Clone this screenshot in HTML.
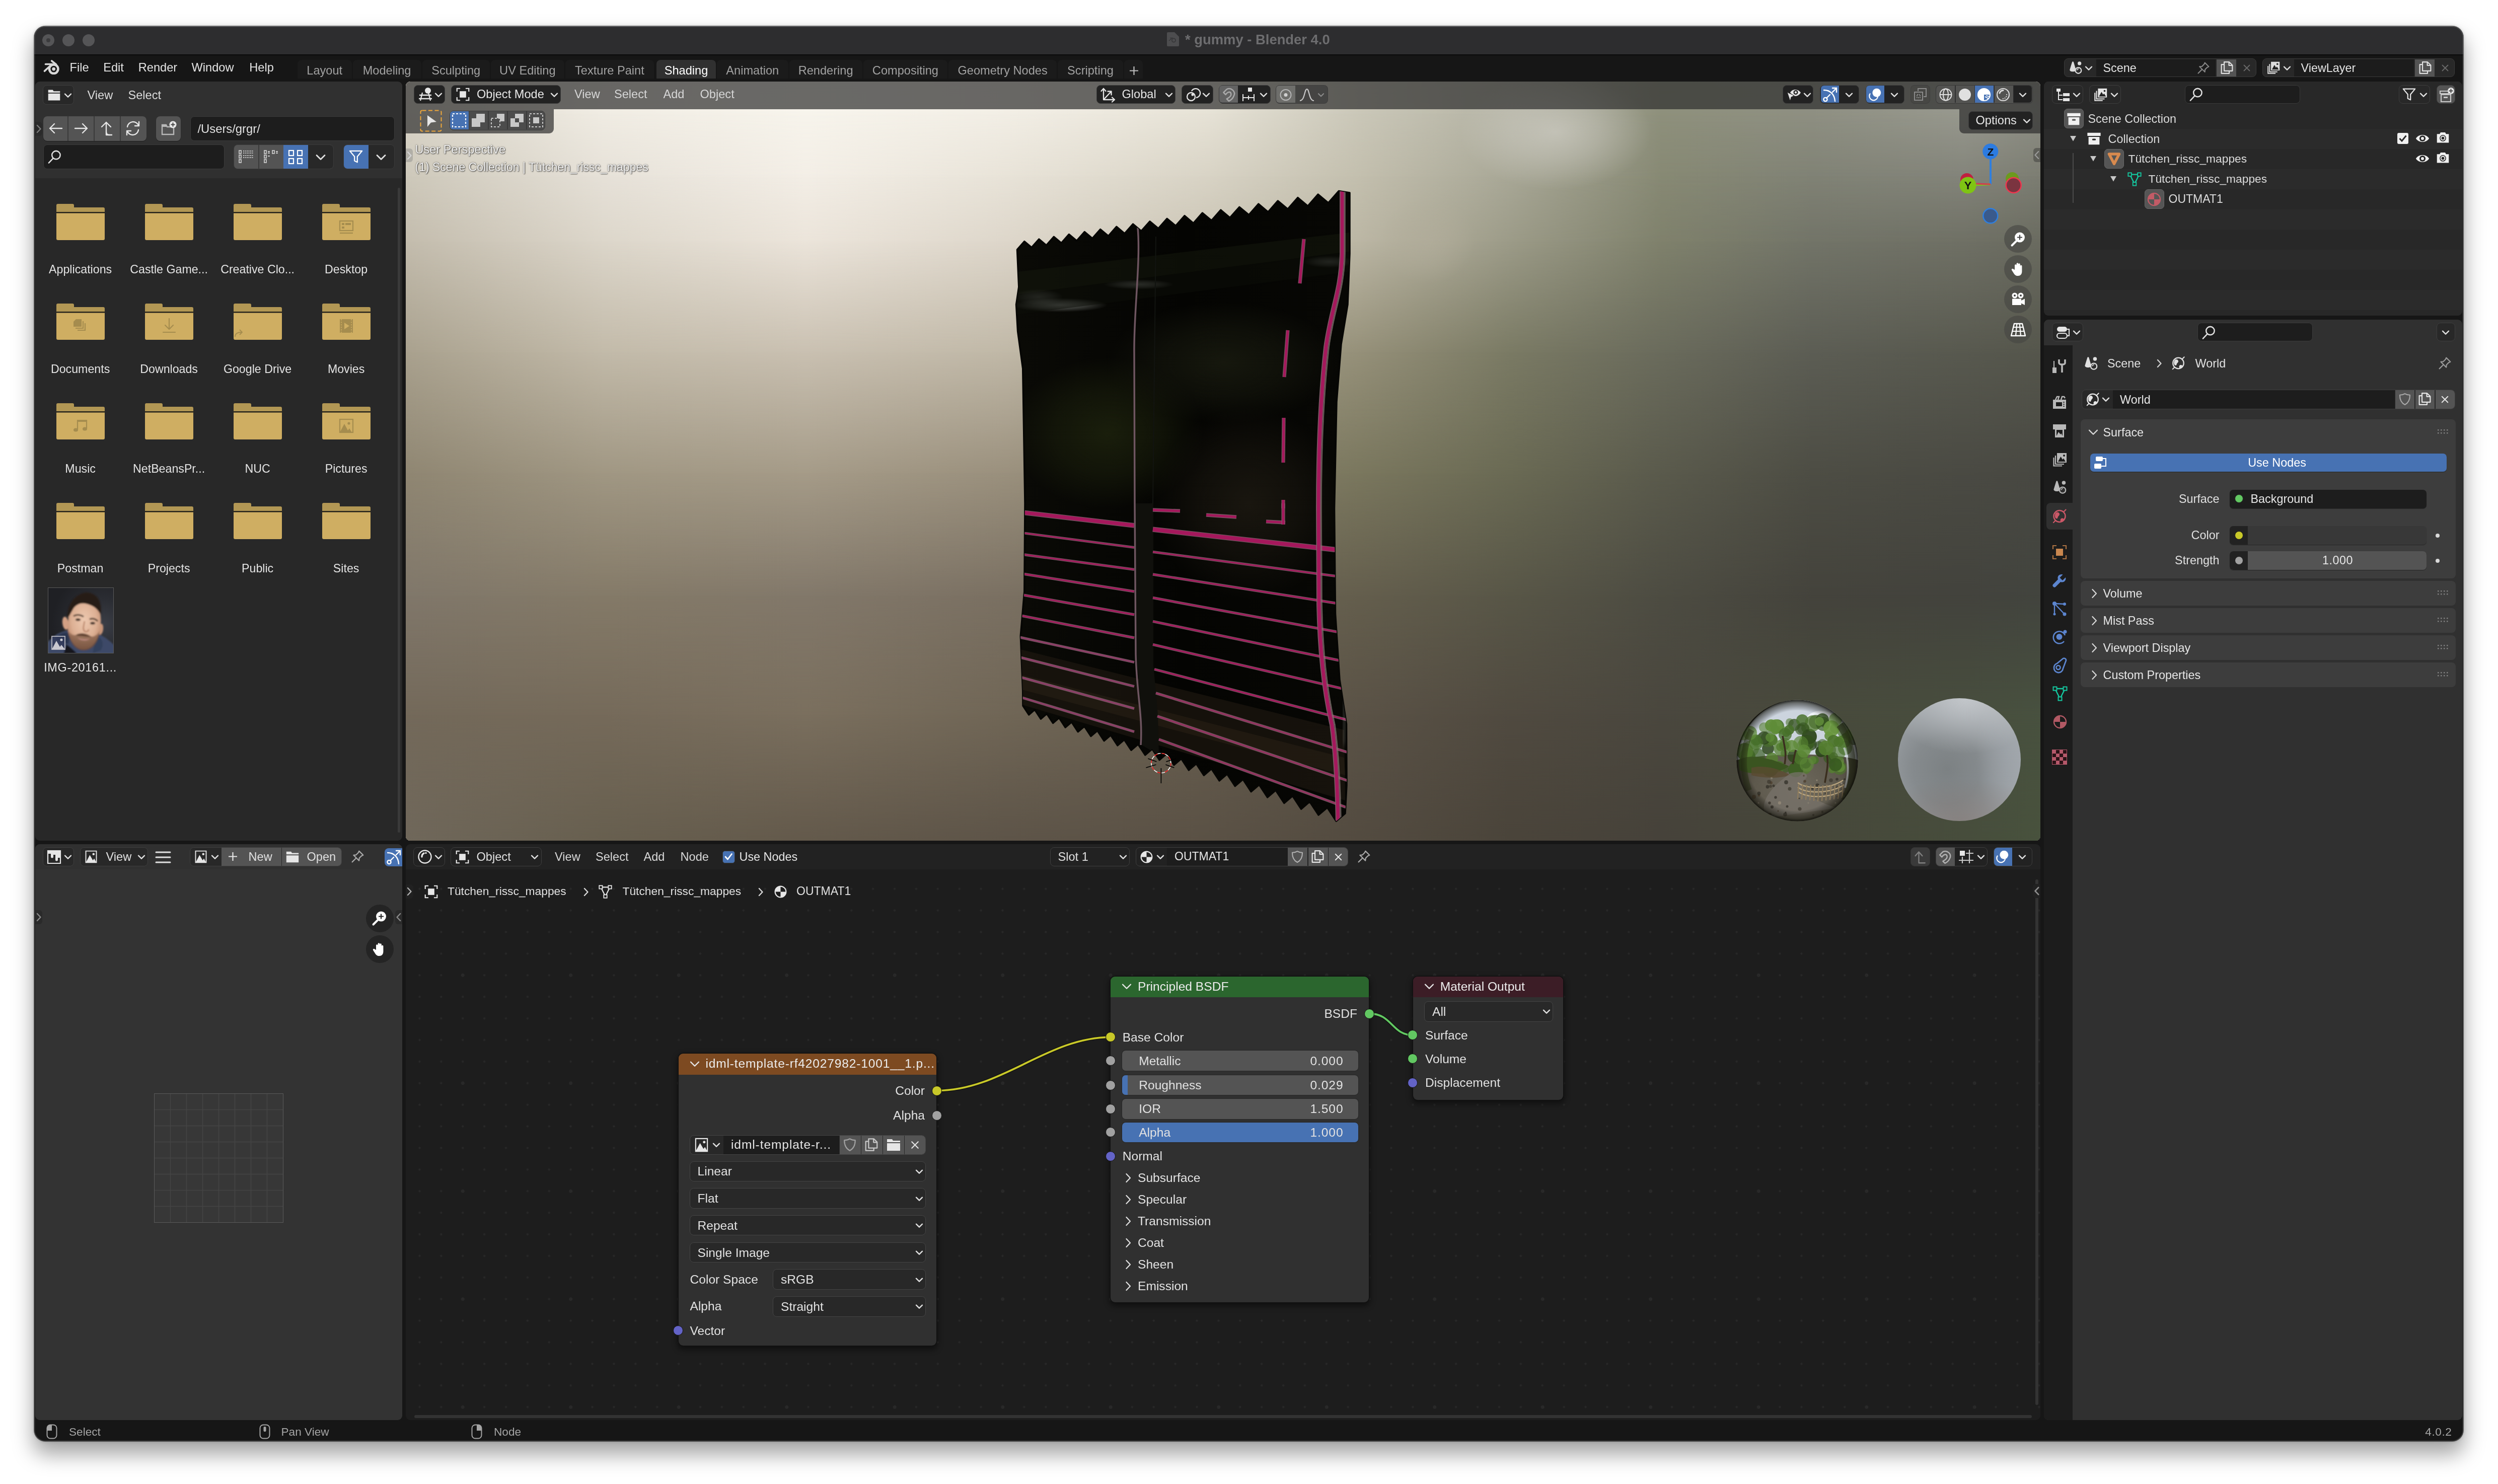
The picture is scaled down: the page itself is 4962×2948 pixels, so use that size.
<!DOCTYPE html>
<html><head><meta charset="utf-8"><title>gummy - Blender 4.0</title>
<style>
html,body{margin:0;padding:0;background:#fff;}
body{width:4962px;height:2948px;position:relative;overflow:hidden;font-family:"Liberation Sans","DejaVu Sans",sans-serif;}
div,svg{position:absolute;box-sizing:border-box;}
svg{overflow:visible;}
svg text{font-family:"Liberation Sans","DejaVu Sans",sans-serif;}
.btn{box-shadow:0 1px 1px rgba(0,0,0,.35);}
</style></head><body>
<div style="left:68px;top:52px;width:4824.5px;height:2811px;background:#161616;border-radius:22px;box-shadow:0 0 0 1px rgba(0,0,0,.45),0 24px 42px 2px rgba(0,0,0,.36),0 0 6px rgba(0,0,0,.22);overflow:hidden;" id="win">
<div style="left:-68px;top:-52px;width:4962px;height:2948px;will-change:transform;">
<div style="left:68px;top:52px;width:4824.5px;height:56px;background:#2d2d2f;border-top:1px solid #4a4a4c;"></div>
<div style="left:68px;top:108px;width:4824.5px;height:2px;background:#0a0a0a;"></div>
<div style="left:84px;top:68px;width:24px;height:24px;background:#555557;border-radius:12px;"></div>
<div style="left:124px;top:68px;width:24px;height:24px;background:#555557;border-radius:12px;"></div>
<div style="left:164px;top:68px;width:24px;height:24px;background:#555557;border-radius:12px;"></div>
<div style="left:92px;top:76px;width:8px;height:8px;background:#3b3b3d;border-radius:4px;"></div>
<svg style="left:2318px;top:64px;" width="24" height="28" viewBox="0 0 24 28"><path d="M2 0 H15 L24 9 V26 a2 2 0 0 1 -2 2 H2 a2 2 0 0 1 -2 -2 V2 a2 2 0 0 1 2 -2z" fill="#4d4d4f"/><circle cx="13.500" cy="16" r="3.600" fill="none" stroke="#38383a" stroke-width="1.800"/><path d="M4 17 L11 11 M6 11.500 H12" stroke="#38383a" stroke-width="1.600" fill="none"/></svg>
<div style="top:60.8px;height:35.6px;line-height:35.6px;font-size:27.4px;color:#6d6d6f;white-space:nowrap;font-weight:700;left:2354px;">* gummy - Blender 4.0</div>
<svg style="left:80px;top:115px;" width="40" height="40" viewBox="0 0 40 40"><g fill="none" stroke="#d8d8d8" stroke-linecap="round"><circle cx="26.700" cy="22.100" r="8.700" stroke-width="4.600"/><path d="M8.500 26.200 L20.600 15 M10.500 12.500 H24 M22.700 6 L31.500 13" stroke-width="3.700"/></g><circle cx="26.700" cy="22.100" r="3.400" fill="#d8d8d8"/></svg>
<div style="top:119.4px;height:30.7px;line-height:30.7px;font-size:23.6px;color:#e4e4e4;white-space:nowrap;left:-842.5px;width:2000px;text-align:center;">File</div>
<div style="top:119.4px;height:30.7px;line-height:30.7px;font-size:23.6px;color:#e4e4e4;white-space:nowrap;left:-774.5px;width:2000px;text-align:center;">Edit</div>
<div style="top:119.4px;height:30.7px;line-height:30.7px;font-size:23.6px;color:#e4e4e4;white-space:nowrap;left:-686.5px;width:2000px;text-align:center;">Render</div>
<div style="top:119.4px;height:30.7px;line-height:30.7px;font-size:23.6px;color:#e4e4e4;white-space:nowrap;left:-577.5px;width:2000px;text-align:center;">Window</div>
<div style="top:119.4px;height:30.7px;line-height:30.7px;font-size:23.6px;color:#e4e4e4;white-space:nowrap;left:-480.5px;width:2000px;text-align:center;">Help</div>
<div style="left:591px;top:119px;width:107.5px;height:37px;background:#1b1b1b;border-radius:8px 8px 0 0;"></div>
<div style="top:125.4px;height:30.7px;line-height:30.7px;font-size:23.6px;color:#a2a2a2;white-space:nowrap;left:-355.25px;width:2000px;text-align:center;">Layout</div>
<div style="left:700.5px;top:119px;width:136.10000000000002px;height:37px;background:#1b1b1b;border-radius:8px 8px 0 0;"></div>
<div style="top:125.4px;height:30.7px;line-height:30.7px;font-size:23.6px;color:#a2a2a2;white-space:nowrap;left:-231.45000000000005px;width:2000px;text-align:center;">Modeling</div>
<div style="left:838.6px;top:119px;width:134.19999999999993px;height:37px;background:#1b1b1b;border-radius:8px 8px 0 0;"></div>
<div style="top:125.4px;height:30.7px;line-height:30.7px;font-size:23.6px;color:#a2a2a2;white-space:nowrap;left:-94.29999999999995px;width:2000px;text-align:center;">Sculpting</div>
<div style="left:974.8px;top:119px;width:146.10000000000014px;height:37px;background:#1b1b1b;border-radius:8px 8px 0 0;"></div>
<div style="top:125.4px;height:30.7px;line-height:30.7px;font-size:23.6px;color:#a2a2a2;white-space:nowrap;left:47.84999999999991px;width:2000px;text-align:center;">UV Editing</div>
<div style="left:1122.9px;top:119px;width:176.0999999999999px;height:37px;background:#1b1b1b;border-radius:8px 8px 0 0;"></div>
<div style="top:125.4px;height:30.7px;line-height:30.7px;font-size:23.6px;color:#a2a2a2;white-space:nowrap;left:210.95000000000005px;width:2000px;text-align:center;">Texture Paint</div>
<div style="left:1304px;top:119px;width:118px;height:37px;background:#303030;border-radius:8px 8px 0 0;"></div>
<div style="top:125.4px;height:30.7px;line-height:30.7px;font-size:23.6px;color:#ffffff;white-space:nowrap;left:363.0px;width:2000px;text-align:center;">Shading</div>
<div style="left:1424px;top:119px;width:141.5999999999999px;height:37px;background:#1b1b1b;border-radius:8px 8px 0 0;"></div>
<div style="top:125.4px;height:30.7px;line-height:30.7px;font-size:23.6px;color:#a2a2a2;white-space:nowrap;left:494.79999999999995px;width:2000px;text-align:center;">Animation</div>
<div style="left:1567.6px;top:119px;width:145.10000000000014px;height:37px;background:#1b1b1b;border-radius:8px 8px 0 0;"></div>
<div style="top:125.4px;height:30.7px;line-height:30.7px;font-size:23.6px;color:#a2a2a2;white-space:nowrap;left:640.1500000000001px;width:2000px;text-align:center;">Rendering</div>
<div style="left:1714.7px;top:119px;width:167.5px;height:37px;background:#1b1b1b;border-radius:8px 8px 0 0;"></div>
<div style="top:125.4px;height:30.7px;line-height:30.7px;font-size:23.6px;color:#a2a2a2;white-space:nowrap;left:798.45px;width:2000px;text-align:center;">Compositing</div>
<div style="left:1884.2px;top:119px;width:214.79999999999995px;height:37px;background:#1b1b1b;border-radius:8px 8px 0 0;"></div>
<div style="top:125.4px;height:30.7px;line-height:30.7px;font-size:23.6px;color:#a2a2a2;white-space:nowrap;left:991.5999999999999px;width:2000px;text-align:center;">Geometry Nodes</div>
<div style="left:2101px;top:119px;width:130px;height:37px;background:#1b1b1b;border-radius:8px 8px 0 0;"></div>
<div style="top:125.4px;height:30.7px;line-height:30.7px;font-size:23.6px;color:#a2a2a2;white-space:nowrap;left:1166.0px;width:2000px;text-align:center;">Scripting</div>
<div style="left:2233px;top:119px;width:37px;height:37px;background:#1b1b1b;border-radius:8px 8px 0 0;"></div>
<svg style="left:2243px;top:131px;" width="19" height="19" viewBox="0 0 19 19"><path d="M9.500 1 V18 M1 9.500 H18" stroke="#bdbdbd" stroke-width="2.200" fill="none"/></svg>
<div style="left:4100px;top:116px;width:382px;height:37px;background:#282828;border-radius:8px;border:1.500px solid #3a3a3a;overflow:hidden;"></div>
<div style="left:4163.5px;top:117.5px;width:237.5px;height:34px;background:#1c1c1c;"></div>
<div style="left:4402.5px;top:117.5px;width:39.0px;height:34px;background:#545454;"></div>
<svg style="left:4108px;top:120px;" width="29" height="29" viewBox="0 0 32 32"><path d="M10.500 2.500 C11.500 2.500 12 3.200 12.400 4.500 L17 20 C17.600 22.500 15 24.500 10.500 24.500 C6 24.500 3 22.500 3.800 20 L8.600 4.500 C9 3.200 9.500 2.500 10.500 2.500Z" fill="#ddd"/><circle cx="25" cy="6.500" r="4" fill="#ddd"/><circle cx="22.500" cy="22" r="6.500" fill="#303030" stroke="#ddd" stroke-width="2.400"/><path d="M19.500 21 A3.500 3.500 0 0 1 22.500 18.500" stroke="#ddd" stroke-width="1.800" fill="none" stroke-linecap="round"/></svg>
<svg style="left:4140px;top:130px;" width="18" height="12" viewBox="0 0 18 12"><path d="M3 2.7 L9 8.7 L15 2.7" fill="none" stroke="#ddd" stroke-width="2.4" stroke-linecap="round" stroke-linejoin="round"/></svg>
<div style="top:119.6px;height:30.4px;line-height:30.4px;font-size:23.4px;color:#e4e4e4;white-space:nowrap;left:4177.5px;">Scene</div>
<svg style="left:4363px;top:121px;" width="28" height="28" viewBox="0 0 32 32"><g fill="none" stroke="#8a8a8a" stroke-width="2.4" stroke-linejoin="round" stroke-linecap="round"><path d="M19 4 L28 13 L24.5 14.5 L19.5 19.5 L19 25 L7 13 L12.5 12.5 L17.5 7.5 Z"/><path d="M12.5 19.5 L4 28"/></g></svg>
<svg style="left:4408.5px;top:120px;" width="29" height="29" viewBox="0 0 32 32"><g fill="none" stroke="#e0e0e0" stroke-width="2.4" stroke-linejoin="round"><path d="M10 7 V3.5 H21 L28 10.5 V23 H10 V7"/><path d="M20.5 3.5 V11 H28" /><path d="M10 9 H4 V28.5 H21 V23"/></g></svg>
<svg style="left:4452px;top:124px;" width="22" height="22" viewBox="0 0 32 32"><path d="M8 8 L24 24 M24 8 L8 24" stroke="#6a6a6a" stroke-width="2.6" stroke-linecap="round" fill="none"/></svg>
<div style="left:4494px;top:116px;width:382px;height:37px;background:#282828;border-radius:8px;border:1.500px solid #3a3a3a;overflow:hidden;"></div>
<div style="left:4556.5px;top:117.5px;width:238.5px;height:34px;background:#1c1c1c;"></div>
<div style="left:4796.5px;top:117.5px;width:39.0px;height:34px;background:#545454;"></div>
<svg style="left:4502px;top:120px;" width="29" height="29" viewBox="0 0 32 32"><path d="M10 3 H29 V22 H10 Z" fill="#ddd"/><path d="M12 20 L17.5 10 L21 16 L23 13.500 L27 20 Z" fill="#222"/><circle cx="24" cy="8" r="2" fill="#222"/><path d="M7 8 V25 H24 M3.500 12 V28.5 H20" fill="none" stroke="#ddd" stroke-width="2.2"/></svg>
<svg style="left:4534px;top:130px;" width="18" height="12" viewBox="0 0 18 12"><path d="M3 2.7 L9 8.7 L15 2.7" fill="none" stroke="#ddd" stroke-width="2.4" stroke-linecap="round" stroke-linejoin="round"/></svg>
<div style="top:119.6px;height:30.4px;line-height:30.4px;font-size:23.4px;color:#e4e4e4;white-space:nowrap;left:4570.5px;">ViewLayer</div>
<svg style="left:4802.5px;top:120px;" width="29" height="29" viewBox="0 0 32 32"><g fill="none" stroke="#e0e0e0" stroke-width="2.4" stroke-linejoin="round"><path d="M10 7 V3.5 H21 L28 10.5 V23 H10 V7"/><path d="M20.5 3.5 V11 H28" /><path d="M10 9 H4 V28.5 H21 V23"/></g></svg>
<svg style="left:4846px;top:124px;" width="22" height="22" viewBox="0 0 32 32"><path d="M8 8 L24 24 M24 8 L8 24" stroke="#6a6a6a" stroke-width="2.6" stroke-linecap="round" fill="none"/></svg>
<div style="left:70px;top:162px;width:729px;height:1508px;background:#282828;border-radius:9px;overflow:hidden;"><div style="left:0;top:0;width:729px;height:192px;background:#303030"></div></div>
<div style="left:85px;top:169px;width:62px;height:39px;background:#282828;border-radius:8px;border:1.500px solid #3e3e3e;"></div>
<svg style="left:93px;top:174px;" width="29" height="29" viewBox="0 0 32 32"><path d="M3 5 H13 L15 8 H29 V11 H3 Z M3 13 H29 V28 H3 Z" fill="#e6e6e6"/></svg>
<svg style="left:125.5px;top:183.5px;" width="18" height="12" viewBox="0 0 18 12"><path d="M3 2.7 L9 8.7 L15 2.7" fill="none" stroke="#e0e0e0" stroke-width="2.4" stroke-linecap="round" stroke-linejoin="round"/></svg>
<div style="top:173.7px;height:30.7px;line-height:30.7px;font-size:23.6px;color:#dcdcdc;white-space:nowrap;left:173.5px;">View</div>
<div style="top:173.7px;height:30.7px;line-height:30.7px;font-size:23.6px;color:#dcdcdc;white-space:nowrap;left:254.5px;">Select</div>
<div style="left:70px;top:242px;width:14px;height:28px;background:#2a2a2a;border-radius:0 6px 6px 0;"></div>
<svg style="left:70px;top:246px;" width="14" height="20" viewBox="0 0 14 20"><path d="M3.9 3 L10.5 10 L3.9 17" fill="none" stroke="#7c7c7c" stroke-width="2.4" stroke-linecap="round" stroke-linejoin="round"/></svg>
<div class="btn" style="left:85.5px;top:230.5px;width:205px;height:49px;background:#545454;border-radius:8px;"></div>
<div style="left:134.25px;top:230.5px;width:1.5px;height:49px;background:#3a3a3a;"></div>
<div style="left:186.25px;top:230.5px;width:1.5px;height:49px;background:#3a3a3a;"></div>
<div style="left:238.25px;top:230.5px;width:1.5px;height:49px;background:#3a3a3a;"></div>
<svg style="left:96px;top:240px;" width="30" height="30" viewBox="0 0 30 30"><path d="M3 15 H27 M12 6 L3 15 L12 24" fill="none" stroke="#e6e6e6" stroke-width="2.400" stroke-linecap="round" stroke-linejoin="round"/></svg>
<svg style="left:146px;top:240px;" width="30" height="30" viewBox="0 0 30 30"><path d="M3 15 H27 M18 6 L27 15 L18 24" fill="none" stroke="#e6e6e6" stroke-width="2.400" stroke-linecap="round" stroke-linejoin="round"/></svg>
<svg style="left:198px;top:240px;" width="30" height="30" viewBox="0 0 30 30"><path d="M13 28 H24 M13 28 a0 0 0 0 1 0 0 V3 M4 12 L13 3 L22 12" fill="none" stroke="#e6e6e6" stroke-width="2.400" stroke-linecap="round" stroke-linejoin="round"/><path d="M13 22 Q13 28 19 28" fill="none" stroke="#e6e6e6" stroke-width="2.400" stroke-linecap="round" stroke-linejoin="round"/></svg>
<svg style="left:249px;top:240px;" width="30" height="30" viewBox="0 0 30 30"><path d="M4 12 A11.500 11.500 0 0 1 26 9 M27 2 V10 H19 M26 18 A11.500 11.500 0 0 1 4 21 M3 28 V20 H11" fill="none" stroke="#e6e6e6" stroke-width="2.400" stroke-linecap="round" stroke-linejoin="round"/></svg>
<div class="btn" style="left:309.5px;top:230.5px;width:49px;height:49px;background:#545454;border-radius:8px;"></div>
<svg style="left:318px;top:239px;" width="32" height="32" viewBox="0 0 32 32"><path d="M4 9 H12 L14 13 H27 V28 H4 Z" fill="none" stroke="#b8b8b8" stroke-width="2.400"/><path d="M4 9 H12 L14 13 H4Z" fill="#b8b8b8"/><circle cx="25.500" cy="8.500" r="7" fill="#e8e8e8"/><path d="M25.500 4.500 V12.500 M21.500 8.500 H29.500" stroke="#444" stroke-width="2"/></svg>
<div style="left:378px;top:230.5px;width:406px;height:49px;background:#1d1d1d;border-radius:8px;border:1.500px solid #3a3a3a;"></div>
<div style="top:240.6px;height:30.9px;line-height:30.9px;font-size:23.8px;color:#e2e2e2;white-space:nowrap;left:392.5px;">/Users/grgr/</div>
<div style="left:85.5px;top:286.5px;width:360px;height:49.5px;background:#1d1d1d;border-radius:8px;border:1.500px solid #3a3a3a;"></div>
<svg style="left:93px;top:296px;" width="31" height="31" viewBox="0 0 32 32"><g fill="none" stroke="#e0e0e0" stroke-width="2.6" stroke-linecap="round"><circle cx="19" cy="12.5" r="8.5"/><path d="M13 19 L4 28.500"/></g></svg>
<div style="left:463.5px;top:286.5px;width:199.5px;height:49.5px;background:#545454;border-radius:8px;overflow:hidden;border:1.500px solid #3a3a3a;"><div style="left:98.500px;top:0;width:49px;height:50px;background:#4772b3"></div><div style="left:147.500px;top:0;width:52px;height:50px;background:#282828"></div><div style="left:48.500px;top:0;width:1.500px;height:50px;background:#3a3a3a"></div></div>
<svg style="left:473px;top:296px;" width="32" height="32" viewBox="0 0 32 32"><g fill="none" stroke="#c8c8c8" stroke-width="1.800"><rect x="2" y="3" width="4" height="6"/><rect x="2" y="12" width="4" height="6"/><rect x="2" y="21" width="4" height="6"/><path d="M10 4 H30 M10 8 H30 M10 13 H30 M10 17 H30" stroke-dasharray="2 1.500"/></g></svg>
<svg style="left:522px;top:296px;" width="32" height="32" viewBox="0 0 32 32"><g fill="none" stroke="#c8c8c8" stroke-width="1.800"><rect x="3" y="3" width="4" height="6"/><rect x="3" y="12" width="4" height="6"/><rect x="3" y="21" width="4" height="6"/><rect x="19" y="3" width="4" height="6"/><path d="M10 5 H14 M10 14 H14 M26 5 H30 M10 8 H14 M26 8 H30" /></g></svg>
<svg style="left:571px;top:296px;" width="32" height="32" viewBox="0 0 32 32"><g fill="none" stroke="#fff" stroke-width="2.200"><rect x="3" y="3" width="9" height="10"/><rect x="20" y="3" width="9" height="10"/><rect x="3" y="19" width="9" height="10"/><rect x="20" y="19" width="9" height="10"/></g></svg>
<svg style="left:626px;top:304.5px;" width="22" height="16" viewBox="0 0 22 16"><path d="M3 3.6 L11 11.6 L19 3.6" fill="none" stroke="#e0e0e0" stroke-width="2.8" stroke-linecap="round" stroke-linejoin="round"/></svg>
<div style="left:682px;top:286.5px;width:102px;height:49.5px;background:#282828;border-radius:8px;overflow:hidden;border:1.500px solid #3a3a3a;"><div style="left:0;top:0;width:49px;height:50px;background:#4772b3"></div></div>
<svg style="left:692px;top:296px;" width="30" height="30" viewBox="0 0 32 32"><path d="M3 4 H29 L19 16 V28 L13 25 V16 Z" fill="none" stroke="#fff" stroke-width="2.4" stroke-linejoin="round"/></svg>
<svg style="left:746px;top:304.5px;" width="22" height="16" viewBox="0 0 22 16"><path d="M3 3.6 L11 11.6 L19 3.6" fill="none" stroke="#e0e0e0" stroke-width="2.8" stroke-linecap="round" stroke-linejoin="round"/></svg>
<div style="left:789.5px;top:373px;width:5.5px;height:1281px;background:#3a3a3a;border-radius:3px;"></div>
<svg style="left:111.6px;top:405px;" width="96" height="72" viewBox="0 0 96 72"><path d="M0 3 a3 3 0 0 1 3 -3 H32 a3 3 0 0 1 3 3 V7 H93 a3 3 0 0 1 3 3 V17 H0 Z" fill="#b29754"/><rect x="0" y="16" width="96" height="2.500" fill="#25221a"/><path d="M0 18.500 H96 V69 a3 3 0 0 1 -3 3 H3 a3 3 0 0 1 -3 -3 Z" fill="#cfae62"/></svg>
<div style="top:520.2px;height:30.2px;line-height:30.2px;font-size:23.2px;color:#e4e4e4;white-space:nowrap;left:-840.4px;width:2000px;text-align:center;">Applications</div>
<svg style="left:287.6px;top:405px;" width="96" height="72" viewBox="0 0 96 72"><path d="M0 3 a3 3 0 0 1 3 -3 H32 a3 3 0 0 1 3 3 V7 H93 a3 3 0 0 1 3 3 V17 H0 Z" fill="#b29754"/><rect x="0" y="16" width="96" height="2.500" fill="#25221a"/><path d="M0 18.500 H96 V69 a3 3 0 0 1 -3 3 H3 a3 3 0 0 1 -3 -3 Z" fill="#cfae62"/></svg>
<div style="top:520.2px;height:30.2px;line-height:30.2px;font-size:23.2px;color:#e4e4e4;white-space:nowrap;left:-664.4px;width:2000px;text-align:center;">Castle Game...</div>
<svg style="left:463.6px;top:405px;" width="96" height="72" viewBox="0 0 96 72"><path d="M0 3 a3 3 0 0 1 3 -3 H32 a3 3 0 0 1 3 3 V7 H93 a3 3 0 0 1 3 3 V17 H0 Z" fill="#b29754"/><rect x="0" y="16" width="96" height="2.500" fill="#25221a"/><path d="M0 18.500 H96 V69 a3 3 0 0 1 -3 3 H3 a3 3 0 0 1 -3 -3 Z" fill="#cfae62"/></svg>
<div style="top:520.2px;height:30.2px;line-height:30.2px;font-size:23.2px;color:#e4e4e4;white-space:nowrap;left:-488.4px;width:2000px;text-align:center;">Creative Clo...</div>
<svg style="left:639.6px;top:405px;" width="96" height="72" viewBox="0 0 96 72"><path d="M0 3 a3 3 0 0 1 3 -3 H32 a3 3 0 0 1 3 3 V7 H93 a3 3 0 0 1 3 3 V17 H0 Z" fill="#b29754"/><rect x="0" y="16" width="96" height="2.500" fill="#25221a"/><path d="M0 18.500 H96 V69 a3 3 0 0 1 -3 3 H3 a3 3 0 0 1 -3 -3 Z" fill="#cfae62"/><rect x="35" y="34" width="26" height="19" fill="none" stroke="#a58c4e" stroke-width="2.200"/><rect x="39" y="38" width="5" height="4" fill="#a58c4e"/><rect x="46" y="38" width="11" height="4" fill="#a58c4e"/><rect x="39" y="45" width="5" height="4" fill="#a58c4e"/><path d="M35 58 H61" fill="none" stroke="#a58c4e" stroke-width="2.200"/></svg>
<div style="top:520.2px;height:30.2px;line-height:30.2px;font-size:23.2px;color:#e4e4e4;white-space:nowrap;left:-312.4px;width:2000px;text-align:center;">Desktop</div>
<svg style="left:111.6px;top:603px;" width="96" height="72" viewBox="0 0 96 72"><path d="M0 3 a3 3 0 0 1 3 -3 H32 a3 3 0 0 1 3 3 V7 H93 a3 3 0 0 1 3 3 V17 H0 Z" fill="#b29754"/><rect x="0" y="16" width="96" height="2.500" fill="#25221a"/><path d="M0 18.500 H96 V69 a3 3 0 0 1 -3 3 H3 a3 3 0 0 1 -3 -3 Z" fill="#cfae62"/><path d="M39 31 H50 V46 H34 V36 Z" fill="#a58c4e"/><path d="M53 35 V49 H38 M57 39 V53 H42" fill="none" stroke="#a58c4e" stroke-width="2.200"/></svg>
<div style="top:718.2px;height:30.2px;line-height:30.2px;font-size:23.2px;color:#e4e4e4;white-space:nowrap;left:-840.4px;width:2000px;text-align:center;">Documents</div>
<svg style="left:287.6px;top:603px;" width="96" height="72" viewBox="0 0 96 72"><path d="M0 3 a3 3 0 0 1 3 -3 H32 a3 3 0 0 1 3 3 V7 H93 a3 3 0 0 1 3 3 V17 H0 Z" fill="#b29754"/><rect x="0" y="16" width="96" height="2.500" fill="#25221a"/><path d="M0 18.500 H96 V69 a3 3 0 0 1 -3 3 H3 a3 3 0 0 1 -3 -3 Z" fill="#cfae62"/><path d="M48 30 V50 M40 43 L48 51 L56 43 M36 57 H60" fill="none" stroke="#a58c4e" stroke-width="2.200" stroke-linecap="round" stroke-linejoin="round"/></svg>
<div style="top:718.2px;height:30.2px;line-height:30.2px;font-size:23.2px;color:#e4e4e4;white-space:nowrap;left:-664.4px;width:2000px;text-align:center;">Downloads</div>
<svg style="left:463.6px;top:603px;" width="96" height="72" viewBox="0 0 96 72"><path d="M0 3 a3 3 0 0 1 3 -3 H32 a3 3 0 0 1 3 3 V7 H93 a3 3 0 0 1 3 3 V17 H0 Z" fill="#b29754"/><rect x="0" y="16" width="96" height="2.500" fill="#25221a"/><path d="M0 18.500 H96 V69 a3 3 0 0 1 -3 3 H3 a3 3 0 0 1 -3 -3 Z" fill="#cfae62"/><path d="M3 66 C3 59 8 57 16 57 M12 52 L17 57 L12 62" fill="none" stroke="#a58c4e" stroke-width="1.800"/></svg>
<div style="top:718.2px;height:30.2px;line-height:30.2px;font-size:23.2px;color:#e4e4e4;white-space:nowrap;left:-488.4px;width:2000px;text-align:center;">Google Drive</div>
<svg style="left:639.6px;top:603px;" width="96" height="72" viewBox="0 0 96 72"><path d="M0 3 a3 3 0 0 1 3 -3 H32 a3 3 0 0 1 3 3 V7 H93 a3 3 0 0 1 3 3 V17 H0 Z" fill="#b29754"/><rect x="0" y="16" width="96" height="2.500" fill="#25221a"/><path d="M0 18.500 H96 V69 a3 3 0 0 1 -3 3 H3 a3 3 0 0 1 -3 -3 Z" fill="#cfae62"/><rect x="35" y="31" width="26" height="27" fill="#a58c4e"/><path d="M44 38 L54 44.500 L44 51Z" fill="#cfae62"/><path d="M38 31 V58 M58 31 V58" stroke="#cfae62" stroke-width="1.500" stroke-dasharray="2.500 2.500"/></svg>
<div style="top:718.2px;height:30.2px;line-height:30.2px;font-size:23.2px;color:#e4e4e4;white-space:nowrap;left:-312.4px;width:2000px;text-align:center;">Movies</div>
<svg style="left:111.6px;top:801px;" width="96" height="72" viewBox="0 0 96 72"><path d="M0 3 a3 3 0 0 1 3 -3 H32 a3 3 0 0 1 3 3 V7 H93 a3 3 0 0 1 3 3 V17 H0 Z" fill="#b29754"/><rect x="0" y="16" width="96" height="2.500" fill="#25221a"/><path d="M0 18.500 H96 V69 a3 3 0 0 1 -3 3 H3 a3 3 0 0 1 -3 -3 Z" fill="#cfae62"/><path d="M42 52 V34 H60 V50" fill="none" stroke="#a58c4e" stroke-width="2.200" stroke-width="2.600"/><ellipse cx="38.500" cy="53" rx="4.500" ry="3.500" fill="#a58c4e"/><ellipse cx="56.500" cy="51" rx="4.500" ry="3.500" fill="#a58c4e"/><rect x="41" y="33" width="20" height="4" fill="#a58c4e"/></svg>
<div style="top:916.2px;height:30.2px;line-height:30.2px;font-size:23.2px;color:#e4e4e4;white-space:nowrap;left:-840.4px;width:2000px;text-align:center;">Music</div>
<svg style="left:287.6px;top:801px;" width="96" height="72" viewBox="0 0 96 72"><path d="M0 3 a3 3 0 0 1 3 -3 H32 a3 3 0 0 1 3 3 V7 H93 a3 3 0 0 1 3 3 V17 H0 Z" fill="#b29754"/><rect x="0" y="16" width="96" height="2.500" fill="#25221a"/><path d="M0 18.500 H96 V69 a3 3 0 0 1 -3 3 H3 a3 3 0 0 1 -3 -3 Z" fill="#cfae62"/></svg>
<div style="top:916.2px;height:30.2px;line-height:30.2px;font-size:23.2px;color:#e4e4e4;white-space:nowrap;left:-664.4px;width:2000px;text-align:center;">NetBeansPr...</div>
<svg style="left:463.6px;top:801px;" width="96" height="72" viewBox="0 0 96 72"><path d="M0 3 a3 3 0 0 1 3 -3 H32 a3 3 0 0 1 3 3 V7 H93 a3 3 0 0 1 3 3 V17 H0 Z" fill="#b29754"/><rect x="0" y="16" width="96" height="2.500" fill="#25221a"/><path d="M0 18.500 H96 V69 a3 3 0 0 1 -3 3 H3 a3 3 0 0 1 -3 -3 Z" fill="#cfae62"/></svg>
<div style="top:916.2px;height:30.2px;line-height:30.2px;font-size:23.2px;color:#e4e4e4;white-space:nowrap;left:-488.4px;width:2000px;text-align:center;">NUC</div>
<svg style="left:639.6px;top:801px;" width="96" height="72" viewBox="0 0 96 72"><path d="M0 3 a3 3 0 0 1 3 -3 H32 a3 3 0 0 1 3 3 V7 H93 a3 3 0 0 1 3 3 V17 H0 Z" fill="#b29754"/><rect x="0" y="16" width="96" height="2.500" fill="#25221a"/><path d="M0 18.500 H96 V69 a3 3 0 0 1 -3 3 H3 a3 3 0 0 1 -3 -3 Z" fill="#cfae62"/><rect x="35" y="32" width="26" height="26" fill="none" stroke="#a58c4e" stroke-width="2.200"/><path d="M35 58 L44 41 L51 54 L54 50 L59 58Z" fill="#a58c4e"/><circle cx="53" cy="40" r="2.600" fill="#a58c4e"/></svg>
<div style="top:916.2px;height:30.2px;line-height:30.2px;font-size:23.2px;color:#e4e4e4;white-space:nowrap;left:-312.4px;width:2000px;text-align:center;">Pictures</div>
<svg style="left:111.6px;top:999px;" width="96" height="72" viewBox="0 0 96 72"><path d="M0 3 a3 3 0 0 1 3 -3 H32 a3 3 0 0 1 3 3 V7 H93 a3 3 0 0 1 3 3 V17 H0 Z" fill="#b29754"/><rect x="0" y="16" width="96" height="2.500" fill="#25221a"/><path d="M0 18.500 H96 V69 a3 3 0 0 1 -3 3 H3 a3 3 0 0 1 -3 -3 Z" fill="#cfae62"/></svg>
<div style="top:1114.2px;height:30.2px;line-height:30.2px;font-size:23.2px;color:#e4e4e4;white-space:nowrap;left:-840.4px;width:2000px;text-align:center;">Postman</div>
<svg style="left:287.6px;top:999px;" width="96" height="72" viewBox="0 0 96 72"><path d="M0 3 a3 3 0 0 1 3 -3 H32 a3 3 0 0 1 3 3 V7 H93 a3 3 0 0 1 3 3 V17 H0 Z" fill="#b29754"/><rect x="0" y="16" width="96" height="2.500" fill="#25221a"/><path d="M0 18.500 H96 V69 a3 3 0 0 1 -3 3 H3 a3 3 0 0 1 -3 -3 Z" fill="#cfae62"/></svg>
<div style="top:1114.2px;height:30.2px;line-height:30.2px;font-size:23.2px;color:#e4e4e4;white-space:nowrap;left:-664.4px;width:2000px;text-align:center;">Projects</div>
<svg style="left:463.6px;top:999px;" width="96" height="72" viewBox="0 0 96 72"><path d="M0 3 a3 3 0 0 1 3 -3 H32 a3 3 0 0 1 3 3 V7 H93 a3 3 0 0 1 3 3 V17 H0 Z" fill="#b29754"/><rect x="0" y="16" width="96" height="2.500" fill="#25221a"/><path d="M0 18.500 H96 V69 a3 3 0 0 1 -3 3 H3 a3 3 0 0 1 -3 -3 Z" fill="#cfae62"/></svg>
<div style="top:1114.2px;height:30.2px;line-height:30.2px;font-size:23.2px;color:#e4e4e4;white-space:nowrap;left:-488.4px;width:2000px;text-align:center;">Public</div>
<svg style="left:639.6px;top:999px;" width="96" height="72" viewBox="0 0 96 72"><path d="M0 3 a3 3 0 0 1 3 -3 H32 a3 3 0 0 1 3 3 V7 H93 a3 3 0 0 1 3 3 V17 H0 Z" fill="#b29754"/><rect x="0" y="16" width="96" height="2.500" fill="#25221a"/><path d="M0 18.500 H96 V69 a3 3 0 0 1 -3 3 H3 a3 3 0 0 1 -3 -3 Z" fill="#cfae62"/></svg>
<div style="top:1114.2px;height:30.2px;line-height:30.2px;font-size:23.2px;color:#e4e4e4;white-space:nowrap;left:-312.4px;width:2000px;text-align:center;">Sites</div>
<div style="left:95px;top:1167px;width:131px;height:131px;background:#2a2c33;overflow:hidden;border:1px solid #5a5a5a;"><svg style="left:0;top:0" width="130" height="130" viewBox="0 0 130 130"><defs><clipPath id="thc"><rect x="0" y="0" width="130" height="130"/></clipPath><radialGradient id="thbg" cx=".85" cy=".55" r=".8"><stop offset="0" stop-color="#3a3d45"/><stop offset=".5" stop-color="#2a2c32"/><stop offset="1" stop-color="#1f2024"/></radialGradient><radialGradient id="thsk" cx=".5" cy=".42" r=".62"><stop offset="0" stop-color="#edc9b0"/><stop offset=".6" stop-color="#ddb094"/><stop offset="1" stop-color="#b98468"/></radialGradient><linearGradient id="thbd" x1="0" y1="0" x2="0" y2="1"><stop offset="0" stop-color="#7a5640" stop-opacity="0"/><stop offset=".35" stop-color="#6e4c38" stop-opacity=".6"/><stop offset="1" stop-color="#6a4a38" stop-opacity=".85"/></linearGradient><filter id="thb"><feGaussianBlur stdDeviation="1.600"/></filter></defs><g clip-path="url(#thc)"><rect width="130" height="130" fill="url(#thbg)"/><g filter="url(#thb)"><path d="M-5 135 L-5 112 C8 96 22 86 42 84 L100 92 C116 98 126 110 136 118 L136 135Z" fill="#3e4a68"/><path d="M14 100 C24 88 36 86 44 90 L40 112 C30 108 20 106 14 100Z" fill="#2c3550"/><path d="M96 96 C108 100 112 112 104 124 L88 130 L92 108Z" fill="#33405c"/><path d="M36 112 C44 118 52 124 58 132 L30 132Z" fill="#15161a"/><ellipse cx="34" cy="70" rx="6" ry="13" fill="#d3a084" transform="rotate(-8 34 70)"/><ellipse cx="104" cy="82" rx="5" ry="11" fill="#c99679" transform="rotate(8 104 82)"/><path d="M40 58 C40 30 62 18 82 24 C100 30 106 48 104 72 C102 98 90 122 70 122 C52 122 40 100 38 78Z" fill="url(#thsk)"/><path d="M38 80 C44 92 50 96 58 92 C66 88 78 90 84 96 C92 98 98 92 102 84 C102 104 90 124 70 124 C50 124 40 102 38 80Z" fill="url(#thbd)"/><path d="M54 94 C62 88 76 90 86 98 C78 96 64 96 54 94Z" fill="#5e3f2e"/><path d="M58 99 C66 102 74 103 82 101 C76 106 64 105 58 99Z" fill="#c48e84"/><path d="M38 60 C36 34 52 12 74 9 C96 8 108 26 104 54 C100 44 92 36 78 32 C66 28 54 32 48 44 C44 50 42 56 38 60Z" fill="#261e19"/><path d="M50 56 C56 52 64 53 70 57" stroke="#4a3426" stroke-width="3" fill="none"/><path d="M82 62 C88 60 94 62 98 66" stroke="#4a3426" stroke-width="3" fill="none"/><ellipse cx="59" cy="63" rx="5" ry="2.500" fill="#3a2a22"/><ellipse cx="88" cy="70" rx="5" ry="2.500" fill="#3a2a22"/><path d="M72 66 C70 76 68 82 72 86 C76 88 80 86 80 82" stroke="#b98468" stroke-width="2.500" fill="none"/></g></g></svg></div>
<svg style="left:102px;top:1263px;" width="28" height="28" viewBox="0 0 28 28"><rect x="1" y="1" width="26" height="26" fill="rgba(50,58,90,.75)" stroke="#b8b8c0" stroke-width="1.800"/><path d="M1 27 L10 10 L17 22 L20 18 L27 27Z" fill="#c8c8d0"/><circle cx="20" cy="8" r="2.600" fill="#c8c8d0"/></svg>
<div style="top:1311.1px;height:30.4px;line-height:30.4px;font-size:23.4px;color:#e4e4e4;white-space:nowrap;letter-spacing:0.7px;left:-840.4px;width:2000px;text-align:center;">IMG-20161...</div>
<div style="left:806px;top:162px;width:3247px;height:1508px;border-radius:9px;overflow:hidden;background:#d9d4c8;">
<div style="left:0;top:0;width:3247px;height:1508px;background:linear-gradient(to right,#d9d4c8 0px,#f0ece3 394px,#f7f4ec 794px,#f2eee5 1194px,#e6e2d6 1594px,#cac7b8 1894px,#b3b2a3 2194px,#8e907c 2494px,#8e8f82 2794px,#97988e 3094px,#8d8e84 3247px);"></div>
<div style="left:0;top:0;width:3247px;height:1508px;background:linear-gradient(to right,#d9d4c8 0px,#f0ece3 394px,#f7f4ec 794px,#f2eee5 1194px,#e6e2d6 1594px,#cac7b8 1894px,#b3b2a3 2194px,#8e907c 2494px,#8e8f82 2794px,#97988e 3094px,#8d8e84 3247px);-webkit-mask-image:linear-gradient(to bottom,rgba(0,0,0,0) 0px,#000 63px);mask-image:linear-gradient(to bottom,rgba(0,0,0,0) 0px,#000 63px);"></div>
<div style="left:0;top:0;width:3247px;height:1508px;background:linear-gradient(to right,#cdc8ba 0px,#e6e1d8 394px,#f3eee6 794px,#e8e3d8 1194px,#d8d3c5 1594px,#c3bfae 1894px,#a8a796 2194px,#878974 2494px,#808275 2794px,#83847a 3094px,#7c7d72 3247px);-webkit-mask-image:linear-gradient(to bottom,rgba(0,0,0,0) 63px,#000 188px);mask-image:linear-gradient(to bottom,rgba(0,0,0,0) 63px,#000 188px);"></div>
<div style="left:0;top:0;width:3247px;height:1508px;background:linear-gradient(to right,#c3bcad 0px,#dcd6ca 394px,#ebe4da 794px,#ddd6ca 1194px,#cac4b4 1594px,#bbb6a4 1894px,#9c9b88 2194px,#7f816c 2494px,#727468 2794px,#6f7065 3094px,#6a6b60 3247px);-webkit-mask-image:linear-gradient(to bottom,rgba(0,0,0,0) 188px,#000 318px);mask-image:linear-gradient(to bottom,rgba(0,0,0,0) 188px,#000 318px);"></div>
<div style="left:0;top:0;width:3247px;height:1508px;background:linear-gradient(to right,#a9a18e 0px,#c2baa9 394px,#c9c0b1 794px,#c0b8a7 1194px,#a7a18d 1594px,#959079 1894px,#7a7a64 2194px,#6a6b5c 2494px,#5c5d54 2794px,#58594f 3094px,#55564c 3247px);-webkit-mask-image:linear-gradient(to bottom,rgba(0,0,0,0) 318px,#000 538px);mask-image:linear-gradient(to bottom,rgba(0,0,0,0) 318px,#000 538px);"></div>
<div style="left:0;top:0;width:3247px;height:1508px;background:linear-gradient(to right,#8f8672 0px,#a09783 394px,#a59b88 794px,#9a907d 1194px,#88826b 1594px,#7a775e 1894px,#6a6a54 2194px,#5a5a4c 2494px,#4d4d44 2794px,#4a4a43 3094px,#484842 3247px);-webkit-mask-image:linear-gradient(to bottom,rgba(0,0,0,0) 538px,#000 778px);mask-image:linear-gradient(to bottom,rgba(0,0,0,0) 538px,#000 778px);"></div>
<div style="left:0;top:0;width:3247px;height:1508px;background:linear-gradient(to right,#80776a 0px,#847a68 394px,#82786a 794px,#7a7062 1194px,#6d6656 1594px,#645e4d 1894px,#585647 2194px,#4d4c42 2494px,#44433c 2794px,#43433d 3094px,#42443e 3247px);-webkit-mask-image:linear-gradient(to bottom,rgba(0,0,0,0) 778px,#000 1021px);mask-image:linear-gradient(to bottom,rgba(0,0,0,0) 778px,#000 1021px);"></div>
<div style="left:0;top:0;width:3247px;height:1508px;background:linear-gradient(to right,#73695a 0px,#756a5a 394px,#7a6f5e 794px,#706656 1194px,#665d4e 1594px,#5a5246 1894px,#504a40 2194px,#4a473e 2494px,#484a3c 2794px,#484e3e 3094px,#48513f 3247px);-webkit-mask-image:linear-gradient(to bottom,rgba(0,0,0,0) 1021px,#000 1258px);mask-image:linear-gradient(to bottom,rgba(0,0,0,0) 1021px,#000 1258px);"></div>
<div style="left:0;top:0;width:3247px;height:1508px;background:linear-gradient(to right,#6f675a 0px,#675f4f 394px,#63594b 794px,#5d5448 1194px,#5a5145 1594px,#534b40 1894px,#4a443a 2194px,#46423a 2494px,#46473a 2794px,#474d3c 3094px,#48523d 3247px);-webkit-mask-image:linear-gradient(to bottom,rgba(0,0,0,0) 1258px,#000 1508px);mask-image:linear-gradient(to bottom,rgba(0,0,0,0) 1258px,#000 1508px);"></div>
<div style="left:2094px;top:-15px;width:380px;height:230px;background:radial-gradient(ellipse closest-side,rgba(214,212,205,0.6) 0,rgba(214,212,205,0.36) 45%,rgba(214,212,205,0) 100%);"></div>
<div style="left:1934px;top:231px;width:190px;height:170px;background:radial-gradient(ellipse closest-side,rgba(178,173,155,0.6) 0,rgba(178,173,155,0.36) 45%,rgba(178,173,155,0) 100%);"></div>
<div style="left:-806px;top:-162px;width:4962px;height:2948px;">
<svg style="left:0px;top:0px;" width="4962" height="2948" viewBox="0 0 4962 2948"><defs><linearGradient id="bagg" x1="0" y1="0" x2="1" y2="0"><stop offset="0" stop-color="#0a0a06"/><stop offset=".5" stop-color="#040402"/><stop offset="1" stop-color="#070704"/></linearGradient><clipPath id="bagc"><polygon points="2020.5,496.0 2034.8,479.7 2049.1,491.7 2063.8,475.1 2078.4,487.3 2093.3,470.4 2108.2,482.8 2123.5,465.5 2138.7,478.3 2154.3,460.6 2169.8,473.6 2185.7,455.6 2201.6,468.8 2217.8,450.4 2234.0,464.0 2250.5,445.2 2267.1,459.0 2284.0,439.8 2300.9,453.9 2318.1,434.3 2335.4,448.7 2353.0,428.7 2370.6,443.5 2388.5,423.0 2406.5,438.1 2424.9,417.2 2443.2,432.5 2461.9,411.3 2480.7,426.9 2499.8,405.2 2518.9,421.2 2538.4,399.0 2557.9,415.3 2577.9,392.7 2597.8,409.3 2618.1,386.2 2638.5,403.2 2659.2,379.6 2681.0,383.0 2681.0,504.0 2677.0,605.0 2664.0,684.0 2655.0,798.0 2650.5,1010.0 2652.5,1219.0 2661.0,1350.0 2674.5,1438.0 2675.0,1560.0 2672.0,1616.0 2672.0,1616.0 2654.2,1631.2 2636.5,1604.1 2619.1,1619.0 2601.6,1592.5 2584.6,1607.1 2567.5,1581.1 2550.8,1595.4 2534.0,1569.9 2517.6,1583.9 2501.2,1558.9 2485.1,1572.6 2469.0,1548.1 2453.2,1561.6 2437.5,1537.6 2422.0,1550.8 2406.5,1527.2 2391.4,1540.2 2376.2,1517.1 2361.3,1529.8 2346.5,1507.1 2331.9,1519.6 2317.3,1497.4 2303.0,1509.6 2288.7,1487.8 2274.7,1499.8 2260.7,1478.5 2247.0,1490.2 2233.2,1469.3 2219.8,1480.8 2206.3,1460.3 2193.1,1471.6 2179.9,1451.5 2167.0,1462.5 2154.0,1442.8 2141.3,1453.7 2128.6,1434.3 2116.2,1445.0 2103.8,1426.0 2091.6,1436.4 2079.4,1417.8 2067.4,1428.1 2055.4,1409.8 2043.7,1419.9 2032.0,1402.0 2031.7,1372.0 2027.3,1263.0 2034.8,1175.0 2036.0,1000.0 2031.7,732.0 2021.6,658.0 2018.6,605.0 2023.8,570.0"/></clipPath><filter id="bl6"><feGaussianBlur stdDeviation="7"/></filter><filter id="bl20"><feGaussianBlur stdDeviation="22"/></filter></defs><polygon points="2020.5,496.0 2034.8,479.7 2049.1,491.7 2063.8,475.1 2078.4,487.3 2093.3,470.4 2108.2,482.8 2123.5,465.5 2138.7,478.3 2154.3,460.6 2169.8,473.6 2185.7,455.6 2201.6,468.8 2217.8,450.4 2234.0,464.0 2250.5,445.2 2267.1,459.0 2284.0,439.8 2300.9,453.9 2318.1,434.3 2335.4,448.7 2353.0,428.7 2370.6,443.5 2388.5,423.0 2406.5,438.1 2424.9,417.2 2443.2,432.5 2461.9,411.3 2480.7,426.9 2499.8,405.2 2518.9,421.2 2538.4,399.0 2557.9,415.3 2577.9,392.7 2597.8,409.3 2618.1,386.2 2638.5,403.2 2659.2,379.6 2681.0,383.0 2681.0,504.0 2677.0,605.0 2664.0,684.0 2655.0,798.0 2650.5,1010.0 2652.5,1219.0 2661.0,1350.0 2674.5,1438.0 2675.0,1560.0 2672.0,1616.0 2672.0,1616.0 2654.2,1631.2 2636.5,1604.1 2619.1,1619.0 2601.6,1592.5 2584.6,1607.1 2567.5,1581.1 2550.8,1595.4 2534.0,1569.9 2517.6,1583.9 2501.2,1558.9 2485.1,1572.6 2469.0,1548.1 2453.2,1561.6 2437.5,1537.6 2422.0,1550.8 2406.5,1527.2 2391.4,1540.2 2376.2,1517.1 2361.3,1529.8 2346.5,1507.1 2331.9,1519.6 2317.3,1497.4 2303.0,1509.6 2288.7,1487.8 2274.7,1499.8 2260.7,1478.5 2247.0,1490.2 2233.2,1469.3 2219.8,1480.8 2206.3,1460.3 2193.1,1471.6 2179.9,1451.5 2167.0,1462.5 2154.0,1442.8 2141.3,1453.7 2128.6,1434.3 2116.2,1445.0 2103.8,1426.0 2091.6,1436.4 2079.4,1417.8 2067.4,1428.1 2055.4,1409.8 2043.7,1419.9 2032.0,1402.0 2031.7,1372.0 2027.3,1263.0 2034.8,1175.0 2036.0,1000.0 2031.7,732.0 2021.6,658.0 2018.6,605.0 2023.8,570.0" fill="url(#bagg)" stroke="#060604" stroke-width="3.500" stroke-linejoin="round"/><g clip-path="url(#bagc)"><defs><radialGradient id="rg1"><stop offset="0" stop-color="#20260e" stop-opacity="0.75"/><stop offset=".55" stop-color="#20260e" stop-opacity="0.41250000000000003"/><stop offset="1" stop-color="#20260e" stop-opacity="0"/></radialGradient><radialGradient id="rg2"><stop offset="0" stop-color="#1a1c10" stop-opacity="0.8"/><stop offset=".55" stop-color="#1a1c10" stop-opacity="0.44000000000000006"/><stop offset="1" stop-color="#1a1c10" stop-opacity="0"/></radialGradient><radialGradient id="rg3"><stop offset="0" stop-color="#9a9f9a" stop-opacity="0.55"/><stop offset=".55" stop-color="#9a9f9a" stop-opacity="0.30250000000000005"/><stop offset="1" stop-color="#9a9f9a" stop-opacity="0"/></radialGradient><radialGradient id="rg4"><stop offset="0" stop-color="#1e1a12" stop-opacity="0.8"/><stop offset=".55" stop-color="#1e1a12" stop-opacity="0.44000000000000006"/><stop offset="1" stop-color="#1e1a12" stop-opacity="0"/></radialGradient></defs><ellipse cx="2200" cy="860" rx="190" ry="150" fill="url(#rg1)"/><ellipse cx="2430" cy="720" rx="230" ry="120" fill="url(#rg2)"/><ellipse cx="2480" cy="1000" rx="190" ry="190" fill="url(#rg4)"/><ellipse cx="2105" cy="606" rx="95" ry="14" fill="url(#rg3)"/><ellipse cx="2262" cy="565" rx="70" ry="10" fill="url(#rg3)" opacity=".8"/><ellipse cx="2062" cy="590" rx="50" ry="16" fill="url(#rg3)" opacity=".6"/><ellipse cx="2640" cy="520" rx="50" ry="12" fill="url(#rg3)" opacity=".6"/><path d="M2020 540 L2680 462 L2680 500 L2020 585Z" fill="#14170c" opacity=".55"/><path d="M2020 585 L2680 500 L2680 540 L2020 625Z" fill="#0c0e08" opacity=".5"/><path d="M2027 1290 L2670 1450 L2672 1590 L2030 1400Z" fill="#1c1710" opacity=".7"/><path d="M2027 1340 L2670 1505 L2672 1540 L2030 1370Z" fill="#2a2116" opacity=".55"/><path d="M2256 1000 L2291 1000 L2291 1320 L2300 1420 L2302 1500 L2268 1480 L2262 1350 L2256 1300Z" fill="#10100c"/><path d="M2026 1017.4 L2253 1043.8" stroke="#84606e" stroke-width="9.8" fill="none" opacity=".85"/><path d="M2026 1017.4 L2253 1043.8" stroke="#a5185c" stroke-width="7.2" fill="none"/><path d="M2026 1058 L2253 1087.6" stroke="#84606e" stroke-width="5.0" fill="none" opacity=".85"/><path d="M2026 1058 L2253 1087.6" stroke="#a5185c" stroke-width="2.4" fill="none"/><path d="M2026 1100.6 L2253 1131.4" stroke="#84606e" stroke-width="5.4" fill="none" opacity=".85"/><path d="M2026 1100.6 L2253 1131.4" stroke="#a5185c" stroke-width="2.8" fill="none"/><path d="M2026 1139 L2253 1175" stroke="#84606e" stroke-width="5.4" fill="none" opacity=".85"/><path d="M2026 1139 L2253 1175" stroke="#a5185c" stroke-width="2.8" fill="none"/><path d="M2026 1180.8 L2253 1221" stroke="#84606e" stroke-width="5.4" fill="none" opacity=".85"/><path d="M2026 1180.8 L2253 1221" stroke="#a5185c" stroke-width="2.8" fill="none"/><path d="M2026 1222.5 L2253 1267" stroke="#84606e" stroke-width="5.4" fill="none" opacity=".85"/><path d="M2026 1222.5 L2253 1267" stroke="#a5185c" stroke-width="2.8" fill="none"/><path d="M2026 1266 L2253 1315.5" stroke="#84606e" stroke-width="5.2" fill="none" opacity=".85"/><path d="M2026 1266 L2253 1315.5" stroke="#8f3a66" stroke-width="2.6" fill="none"/><path d="M2026 1305.7 L2253 1363.6" stroke="#84606e" stroke-width="5.2" fill="none" opacity=".85"/><path d="M2026 1305.7 L2253 1363.6" stroke="#8f3a66" stroke-width="2.6" fill="none"/><path d="M2026 1345 L2253 1407.5" stroke="#84606e" stroke-width="5.2" fill="none" opacity=".85"/><path d="M2026 1345 L2253 1407.5" stroke="#8f3a66" stroke-width="2.6" fill="none"/><path d="M2026 1384.6 L2253 1453.5" stroke="#84606e" stroke-width="5.2" fill="none" opacity=".85"/><path d="M2026 1384.6 L2253 1453.5" stroke="#8f3a66" stroke-width="2.6" fill="none"/><path d="M2290 1051.7 L2685 1095.4669753086418" stroke="#84606e" stroke-width="10.4" fill="none" opacity=".85"/><path d="M2290 1051.7 L2685 1095.4669753086418" stroke="#a5185c" stroke-width="7.8" fill="none"/><path d="M2290 1096.4 L2685 1148.7009259259257" stroke="#84606e" stroke-width="5.2" fill="none" opacity=".85"/><path d="M2290 1096.4 L2685 1148.7009259259257" stroke="#a5185c" stroke-width="2.6" fill="none"/><path d="M2290 1141 L2685 1203.1759259259259" stroke="#84606e" stroke-width="5.4" fill="none" opacity=".85"/><path d="M2290 1141 L2685 1203.1759259259259" stroke="#a5185c" stroke-width="2.8" fill="none"/><path d="M2290 1187.5 L2685 1260.648148148148" stroke="#84606e" stroke-width="5.4" fill="none" opacity=".85"/><path d="M2290 1187.5 L2685 1260.648148148148" stroke="#a5185c" stroke-width="2.8" fill="none"/><path d="M2290 1234.4 L2685 1317.1793209876541" stroke="#84606e" stroke-width="5.4" fill="none" opacity=".85"/><path d="M2290 1234.4 L2685 1317.1793209876541" stroke="#a5185c" stroke-width="2.8" fill="none"/><path d="M2290 1280.4 L2685 1372.3228395061728" stroke="#84606e" stroke-width="5.4" fill="none" opacity=".85"/><path d="M2290 1280.4 L2685 1372.3228395061728" stroke="#a5185c" stroke-width="2.8" fill="none"/><path d="M2293 1329.5 L2685 1432.516975308642" stroke="#84606e" stroke-width="5.4" fill="none" opacity=".85"/><path d="M2293 1329.5 L2685 1432.516975308642" stroke="#a5185c" stroke-width="2.8" fill="none"/><path d="M2296 1376.8 L2685 1497.006790123457" stroke="#84606e" stroke-width="5.4" fill="none" opacity=".85"/><path d="M2296 1376.8 L2685 1497.006790123457" stroke="#96305f" stroke-width="2.8" fill="none"/><path d="M2299 1422.8 L2685 1553.4913580246914" stroke="#84606e" stroke-width="5.4" fill="none" opacity=".85"/><path d="M2299 1422.8 L2685 1553.4913580246914" stroke="#96305f" stroke-width="2.8" fill="none"/><path d="M2302 1468.8 L2685 1607.6595679012346" stroke="#84606e" stroke-width="5.4" fill="none" opacity=".85"/><path d="M2302 1468.8 L2685 1607.6595679012346" stroke="#96305f" stroke-width="2.8" fill="none"/><path d="M2290 1013 L2344 1015" stroke="#84606e" stroke-width="7.3" fill="none" opacity=".85"/><path d="M2290 1013 L2344 1015" stroke="#a5185c" stroke-width="4.7" fill="none"/><path d="M2396 1023 L2456 1027" stroke="#84606e" stroke-width="7.3" fill="none" opacity=".85"/><path d="M2396 1023 L2456 1027" stroke="#a5185c" stroke-width="4.7" fill="none"/><path d="M2515 1036 L2553 1038" stroke="#84606e" stroke-width="7.3" fill="none" opacity=".85"/><path d="M2515 1036 L2553 1038" stroke="#a5185c" stroke-width="4.7" fill="none"/><path d="M2549 1000 L2549 1042" stroke="#84606e" stroke-width="7.3" fill="none" opacity=".85"/><path d="M2549 1000 L2549 1042" stroke="#a5185c" stroke-width="4.7" fill="none"/><path d="M2590 475 L2582 563" stroke="#84606e" stroke-width="7.3" fill="none" opacity=".85"/><path d="M2590 475 L2582 563" stroke="#a5185c" stroke-width="4.7" fill="none"/><path d="M2558 656 L2551 749" stroke="#84606e" stroke-width="7.3" fill="none" opacity=".85"/><path d="M2558 656 L2551 749" stroke="#a5185c" stroke-width="4.7" fill="none"/><path d="M2550 830 L2549 919" stroke="#84606e" stroke-width="7.3" fill="none" opacity=".85"/><path d="M2550 830 L2549 919" stroke="#a5185c" stroke-width="4.7" fill="none"/><path d="M2549 993 L2549 1010" stroke="#84606e" stroke-width="7.3" fill="none" opacity=".85"/><path d="M2549 993 L2549 1010" stroke="#a5185c" stroke-width="4.7" fill="none"/><path d="M2260 452 C2266 520 2252 620 2253 700 L2254 1000 L2256 1300 C2258 1380 2270 1420 2266 1480" stroke="#6e5560" stroke-width="3.500" fill="none"/><path d="M2296 470 L2290 1000" stroke="#121410" stroke-width="2" fill="none"/><path d="M2666 380 L2666 504 C2664 580 2645 610 2634 690 C2624 780 2619 900 2619 1010 L2620 1200 C2622 1300 2632 1380 2646 1440 C2654 1500 2657 1560 2658 1640" stroke="#84606e" stroke-width="10" fill="none" opacity=".9"/><path d="M2666 380 L2666 504 C2664 580 2645 610 2634 690 C2624 780 2619 900 2619 1010 L2620 1200 C2622 1300 2632 1380 2646 1440 C2654 1500 2657 1560 2658 1640" stroke="#a5185c" stroke-width="6.500" fill="none"/><path d="M2672 380 L2672 504 C2670 580 2651 610 2640 690 C2630 780 2625 900 2625 1010 L2626 1200 C2628 1300 2638 1380 2652 1440 C2660 1500 2663 1560 2664 1640" stroke="#8d8078" stroke-width="1.500" fill="none" opacity=".8"/><path d="M2668 1390 C2674 1420 2672 1450 2668 1480" stroke="#cfd2cc" stroke-width="3" fill="none" opacity=".7" filter="url(#bl6)"/></g><circle cx="2306.4" cy="1516" r="19.500" fill="none" stroke="#fff" stroke-width="1.600"/><circle cx="2306.4" cy="1516" r="19.500" fill="none" stroke="#e01010" stroke-width="1.600" stroke-dasharray="7.600 7.700"/><path d="M2306.4 1486 V1506 M2306.4 1526 V1556 M2276.4 1525 L2296.4 1519 M2316.4 1513 L2336.4 1507 M2280.4 1507 L2297.4 1513 M2315.4 1519 L2332.4 1525" stroke="#000" stroke-width="1.600" fill="none"/></svg>
<svg style="left:3448.5px;top:1389.5px;" width="242" height="242" viewBox="0 0 242 242"><defs><clipPath id="spc"><circle cx="121" cy="121" r="120.500"/></clipPath><radialGradient id="sprim" cx=".5" cy=".5" r=".5"><stop offset="0" stop-color="#000" stop-opacity="0"/><stop offset=".82" stop-color="#000" stop-opacity="0"/><stop offset=".95" stop-color="#14140c" stop-opacity=".55"/><stop offset="1" stop-color="#0a0a06" stop-opacity=".9"/></radialGradient><radialGradient id="spgr" cx=".5" cy=".75" r=".6"><stop offset="0" stop-color="#6f6a5e"/><stop offset=".6" stop-color="#5d584c"/><stop offset="1" stop-color="#3a372e"/></radialGradient></defs><g clip-path="url(#spc)"><circle cx="121" cy="121" r="121" fill="url(#spgr)"/><path d="M0 120 C10 40 70 0 121 0 C180 0 235 40 242 120 C200 105 60 105 0 120Z" fill="#ccd4de"/><ellipse cx="168" cy="42" rx="30" ry="20" fill="#eef2f7"/><circle cx="81" cy="53" r="14" fill="#47702a" opacity="0.88"/><circle cx="29" cy="97" r="16" fill="#5f8c38" opacity="0.56"/><circle cx="106" cy="45" r="8" fill="#4d752c" opacity="0.57"/><circle cx="136" cy="135" r="13" fill="#557f30" opacity="0.78"/><circle cx="98" cy="138" r="7" fill="#385a20" opacity="0.67"/><circle cx="41" cy="80" r="10" fill="#385a20" opacity="0.59"/><circle cx="137" cy="57" r="8" fill="#47702a" opacity="0.78"/><circle cx="148" cy="89" r="12" fill="#2b4419" opacity="0.74"/><circle cx="217" cy="75" r="9" fill="#385a20" opacity="0.83"/><circle cx="63" cy="97" r="12" fill="#2b4419" opacity="0.84"/><circle cx="73" cy="138" r="8" fill="#4d752c" opacity="0.62"/><circle cx="85" cy="133" r="11" fill="#47702a" opacity="0.86"/><circle cx="138" cy="127" r="10" fill="#2b4419" opacity="0.79"/><circle cx="139" cy="85" r="15" fill="#6a9840" opacity="0.74"/><circle cx="158" cy="44" r="14" fill="#33501e" opacity="0.66"/><circle cx="95" cy="106" r="7" fill="#33501e" opacity="0.69"/><circle cx="146" cy="88" r="9" fill="#6a9840" opacity="0.60"/><circle cx="64" cy="78" r="16" fill="#47702a" opacity="0.62"/><circle cx="99" cy="66" r="8" fill="#4d752c" opacity="0.90"/><circle cx="71" cy="80" r="11" fill="#4d752c" opacity="0.93"/><circle cx="42" cy="86" r="9" fill="#5f8c38" opacity="0.55"/><circle cx="196" cy="57" r="10" fill="#385a20" opacity="0.72"/><circle cx="91" cy="96" r="17" fill="#557f30" opacity="0.73"/><circle cx="205" cy="135" r="14" fill="#4d752c" opacity="0.71"/><circle cx="97" cy="87" r="11" fill="#5f8c38" opacity="0.58"/><circle cx="55" cy="55" r="10" fill="#557f30" opacity="0.59"/><circle cx="136" cy="93" r="16" fill="#557f30" opacity="0.58"/><circle cx="55" cy="76" r="13" fill="#2b4419" opacity="0.79"/><circle cx="115" cy="50" r="12" fill="#33501e" opacity="0.74"/><circle cx="78" cy="53" r="14" fill="#6a9840" opacity="0.74"/><circle cx="164" cy="91" r="9" fill="#2b4419" opacity="0.61"/><circle cx="131" cy="41" r="12" fill="#47702a" opacity="0.83"/><circle cx="67" cy="75" r="9" fill="#5f8c38" opacity="0.76"/><circle cx="184" cy="72" r="9" fill="#5f8c38" opacity="0.87"/><circle cx="193" cy="113" r="9" fill="#33501e" opacity="0.69"/><circle cx="15" cy="71" r="10" fill="#6a9840" opacity="0.63"/><circle cx="145" cy="73" r="15" fill="#2b4419" opacity="0.93"/><circle cx="90" cy="60" r="9" fill="#5f8c38" opacity="0.69"/><circle cx="117" cy="138" r="13" fill="#557f30" opacity="0.74"/><circle cx="156" cy="120" r="8" fill="#47702a" opacity="0.91"/><circle cx="185" cy="115" r="12" fill="#385a20" opacity="0.72"/><circle cx="152" cy="47" r="16" fill="#4d752c" opacity="0.74"/><circle cx="176" cy="47" r="9" fill="#385a20" opacity="0.56"/><circle cx="142" cy="85" r="14" fill="#33501e" opacity="0.81"/><circle cx="87" cy="94" r="8" fill="#557f30" opacity="0.87"/><circle cx="172" cy="48" r="14" fill="#385a20" opacity="0.72"/><circle cx="205" cy="122" r="9" fill="#6a9840" opacity="0.64"/><circle cx="121" cy="116" r="10" fill="#4d752c" opacity="0.88"/><circle cx="22" cy="113" r="16" fill="#4d752c" opacity="0.88"/><circle cx="206" cy="81" r="9" fill="#557f30" opacity="0.90"/><circle cx="183" cy="100" r="15" fill="#385a20" opacity="0.62"/><circle cx="115" cy="112" r="13" fill="#2b4419" opacity="0.82"/><circle cx="128" cy="87" r="15" fill="#557f30" opacity="0.65"/><circle cx="71" cy="117" r="12" fill="#557f30" opacity="0.85"/><circle cx="214" cy="83" r="13" fill="#5f8c38" opacity="0.83"/><circle cx="110" cy="92" r="12" fill="#5f8c38" opacity="0.83"/><circle cx="206" cy="134" r="10" fill="#5f8c38" opacity="0.89"/><circle cx="39" cy="80" r="11" fill="#47702a" opacity="0.82"/><circle cx="105" cy="60" r="10" fill="#47702a" opacity="0.91"/><circle cx="43" cy="111" r="14" fill="#385a20" opacity="0.65"/><circle cx="39" cy="86" r="14" fill="#47702a" opacity="0.71"/><circle cx="118" cy="139" r="15" fill="#385a20" opacity="0.83"/><circle cx="233" cy="79" r="11" fill="#2b4419" opacity="0.68"/><circle cx="171" cy="40" r="13" fill="#33501e" opacity="0.83"/><circle cx="95" cy="91" r="10" fill="#47702a" opacity="0.60"/><circle cx="216" cy="61" r="16" fill="#47702a" opacity="0.66"/><circle cx="17" cy="117" r="10" fill="#385a20" opacity="0.88"/><circle cx="200" cy="107" r="16" fill="#4d752c" opacity="0.61"/><circle cx="216" cy="96" r="14" fill="#47702a" opacity="0.66"/><circle cx="189" cy="57" r="16" fill="#6a9840" opacity="0.93"/><circle cx="151" cy="120" r="8" fill="#5f8c38" opacity="0.58"/><circle cx="203" cy="84" r="10" fill="#4d752c" opacity="0.92"/><circle cx="69" cy="51" r="12" fill="#5f8c38" opacity="0.93"/><circle cx="227" cy="65" r="9" fill="#6a9840" opacity="0.80"/><circle cx="128" cy="59" r="11" fill="#385a20" opacity="0.66"/><circle cx="190" cy="139" r="7" fill="#557f30" opacity="0.84"/><circle cx="133" cy="57" r="12" fill="#33501e" opacity="0.59"/><circle cx="193" cy="82" r="12" fill="#4d752c" opacity="0.94"/><circle cx="78" cy="60" r="9" fill="#5f8c38" opacity="0.88"/><circle cx="168" cy="103" r="11" fill="#2b4419" opacity="0.94"/><circle cx="197" cy="39" r="13" fill="#6a9840" opacity="0.72"/><circle cx="21" cy="106" r="11" fill="#6a9840" opacity="0.79"/><circle cx="165" cy="43" r="9" fill="#6a9840" opacity="0.73"/><circle cx="67" cy="136" r="17" fill="#2b4419" opacity="0.65"/><circle cx="226" cy="70" r="11" fill="#557f30" opacity="0.68"/><circle cx="27" cy="66" r="14" fill="#5f8c38" opacity="0.75"/><circle cx="9" cy="65" r="8" fill="#4d752c" opacity="0.78"/><circle cx="97" cy="69" r="13" fill="#47702a" opacity="0.78"/><circle cx="128" cy="115" r="14" fill="#4d752c" opacity="0.86"/><circle cx="171" cy="88" r="10" fill="#385a20" opacity="0.57"/><circle cx="197" cy="129" r="13" fill="#385a20" opacity="0.91"/><circle cx="178" cy="96" r="15" fill="#557f30" opacity="0.88"/><circle cx="140" cy="129" r="14" fill="#5f8c38" opacity="0.58"/><circle cx="17" cy="103" r="17" fill="#4d752c" opacity="0.88"/><circle cx="134" cy="102" r="13" fill="#5f8c38" opacity="0.75"/><path d="M4 120 C30 105 70 118 105 132 C80 150 30 150 6 140Z" fill="#3a5420"/><path d="M30 135 C60 128 90 140 108 150 C80 158 50 155 30 150Z" fill="#5a4a30" opacity=".8"/><path d="M92 72 C96 95 100 105 96 128 M118 100 L112 128 M180 110 C184 130 178 150 176 165" stroke="#3a2e1e" stroke-width="3.500" fill="none"/><path d="M108 146 C130 140 150 146 135 160 C120 176 150 200 200 215 L60 235 C40 200 80 165 108 146Z" fill="#77726a" opacity=".75"/><circle cx="21" cy="218" r="3.4" fill="#9a8f7c" opacity=".7"/><circle cx="200" cy="158" r="2.8" fill="#2e2b24" opacity=".7"/><circle cx="70" cy="156" r="2.2" fill="#8a8272" opacity=".7"/><circle cx="66" cy="205" r="2.7" fill="#2e2b24" opacity=".7"/><circle cx="35" cy="227" r="2.2" fill="#3c382e" opacity=".7"/><circle cx="143" cy="205" r="1.7" fill="#8a8272" opacity=".7"/><circle cx="86" cy="205" r="3.2" fill="#9a8f7c" opacity=".7"/><circle cx="134" cy="151" r="1.7" fill="#4a3a2a" opacity=".7"/><circle cx="215" cy="158" r="2.0" fill="#2e2b24" opacity=".7"/><circle cx="78" cy="194" r="2.7" fill="#2e2b24" opacity=".7"/><circle cx="173" cy="234" r="2.9" fill="#4a3a2a" opacity=".7"/><circle cx="216" cy="230" r="1.5" fill="#2e2b24" opacity=".7"/><circle cx="35" cy="193" r="4.0" fill="#4a3a2a" opacity=".7"/><circle cx="97" cy="228" r="3.8" fill="#3c382e" opacity=".7"/><circle cx="136" cy="162" r="2.8" fill="#4a3a2a" opacity=".7"/><circle cx="47" cy="220" r="2.8" fill="#3c382e" opacity=".7"/><circle cx="161" cy="170" r="3.7" fill="#2e2b24" opacity=".7"/><circle cx="99" cy="164" r="3.9" fill="#2e2b24" opacity=".7"/><circle cx="101" cy="212" r="2.5" fill="#2e2b24" opacity=".7"/><circle cx="83" cy="221" r="1.5" fill="#4a3a2a" opacity=".7"/><circle cx="188" cy="160" r="3.8" fill="#3c382e" opacity=".7"/><circle cx="200" cy="175" r="2.4" fill="#2e2b24" opacity=".7"/><circle cx="98" cy="224" r="1.7" fill="#2e2b24" opacity=".7"/><circle cx="171" cy="223" r="2.2" fill="#3c382e" opacity=".7"/><circle cx="187" cy="174" r="3.8" fill="#8a8272" opacity=".7"/><circle cx="214" cy="187" r="2.3" fill="#4a3a2a" opacity=".7"/><circle cx="177" cy="186" r="1.6" fill="#2e2b24" opacity=".7"/><circle cx="203" cy="230" r="2.9" fill="#3c382e" opacity=".7"/><circle cx="30" cy="212" r="2.6" fill="#8a8272" opacity=".7"/><circle cx="149" cy="174" r="1.6" fill="#9a8f7c" opacity=".7"/><circle cx="45" cy="190" r="2.4" fill="#4a3a2a" opacity=".7"/><circle cx="71" cy="213" r="3.1" fill="#2e2b24" opacity=".7"/><circle cx="151" cy="176" r="2.9" fill="#2e2b24" opacity=".7"/><circle cx="44" cy="205" r="1.7" fill="#9a8f7c" opacity=".7"/><circle cx="201" cy="192" r="2.1" fill="#4a3a2a" opacity=".7"/><circle cx="219" cy="188" r="1.8" fill="#8a8272" opacity=".7"/><circle cx="69" cy="165" r="2.9" fill="#4a3a2a" opacity=".7"/><circle cx="68" cy="172" r="2.9" fill="#3c382e" opacity=".7"/><circle cx="170" cy="185" r="2.5" fill="#9a8f7c" opacity=".7"/><circle cx="62" cy="173" r="3.4" fill="#2e2b24" opacity=".7"/><circle cx="76" cy="232" r="1.8" fill="#9a8f7c" opacity=".7"/><circle cx="126" cy="217" r="3.6" fill="#3c382e" opacity=".7"/><circle cx="74" cy="171" r="2.5" fill="#2e2b24" opacity=".7"/><circle cx="106" cy="177" r="3.5" fill="#3c382e" opacity=".7"/><circle cx="45" cy="186" r="3.4" fill="#2e2b24" opacity=".7"/><circle cx="214" cy="192" r="1.7" fill="#9a8f7c" opacity=".7"/><circle cx="191" cy="233" r="2.1" fill="#3c382e" opacity=".7"/><circle cx="65" cy="163" r="3.9" fill="#3c382e" opacity=".7"/><circle cx="208" cy="211" r="3.1" fill="#2e2b24" opacity=".7"/><circle cx="37" cy="216" r="1.5" fill="#8a8272" opacity=".7"/><circle cx="67" cy="228" r="3.1" fill="#4a3a2a" opacity=".7"/><circle cx="212" cy="203" r="2.8" fill="#2e2b24" opacity=".7"/><circle cx="160" cy="160" r="1.7" fill="#9a8f7c" opacity=".7"/><circle cx="209" cy="166" r="2.2" fill="#9a8f7c" opacity=".7"/><circle cx="20" cy="196" r="4.0" fill="#4a3a2a" opacity=".7"/><circle cx="212" cy="205" r="3.7" fill="#2e2b24" opacity=".7"/><circle cx="125" cy="196" r="1.6" fill="#2e2b24" opacity=".7"/><circle cx="161" cy="176" r="1.6" fill="#2e2b24" opacity=".7"/><circle cx="197" cy="205" r="1.7" fill="#8a8272" opacity=".7"/><circle cx="153" cy="229" r="2.1" fill="#3c382e" opacity=".7"/><path d="M122 165 C140 178 185 178 212 160 M122 174 C140 187 185 187 214 169 M123 183 C142 196 185 196 212 180" stroke="#b8a47e" stroke-width="2.400" fill="none"/><path d="M124 168 L122 197 M132 168 L130 198 M140 169 L138 199 M148 169 L146 200 M156 169 L154 201 M164 170 L162 202 M172 170 L170 201 M180 169 L178 200 M188 169 L186 199 M196 169 L194 198 M204 168 L202 197 M212 168 L210 196" stroke="#8f7c5c" stroke-width="2.200" fill="none"/><path d="M205 50 C235 90 238 150 215 200" stroke="#2a3018" stroke-width="14" fill="none" opacity=".6"/><path d="M214 95 C224 120 224 150 216 175" stroke="#cfd6dc" stroke-width="4" fill="none" opacity=".6"/><path d="M30 60 C12 95 10 140 25 180" stroke="#2f3a1a" stroke-width="12" fill="none" opacity=".55"/><circle cx="121" cy="121" r="121" fill="url(#sprim)"/></g></svg>
<div style="left:3770px;top:1387px;width:244px;height:244px;border-radius:50%;background:radial-gradient(ellipse 170px 90px at 52% 102%,rgba(124,108,100,.5) 0,rgba(124,108,100,0) 100%),radial-gradient(ellipse 160px 110px at 55% 0%,rgba(196,200,204,.95) 0,rgba(196,200,204,0) 100%),radial-gradient(ellipse 90px 170px at 100% 45%,rgba(160,166,172,.8) 0,rgba(160,166,172,0) 100%),radial-gradient(ellipse 150px 150px at 40% 58%,#7c8183 0,#858a8d 45%,#969b9f 80%,#a3a7aa 100%);"></div>
<div style="left:806px;top:162px;width:3247px;height:55px;background:rgba(46,46,46,.70);border-radius:9px 9px 0 0;"></div>
<div style="left:806px;top:217px;width:294px;height:47.5px;background:rgba(46,46,46,.70);border-radius:0 0 9px 0;"></div>
<div style="left:3892px;top:217px;width:161px;height:47.5px;background:rgba(46,46,46,.70);border-radius:0 0 0 9px;"></div>
<div style="left:821.5px;top:168.5px;width:62.5px;height:37px;background:#222222;border-radius:8px;border:1.500px solid #3c3c3c;"></div>
<svg style="left:830px;top:172px;" width="30" height="30" viewBox="0 0 30 30"><g fill="none" stroke="#e6e6e6" stroke-width="2.300"><path d="M3 17 H27 M9 12 L5 28 M21 12 L25 28 M2 24 H28"/></g><circle cx="20" cy="8" r="6" fill="#e6e6e6"/></svg>
<svg style="left:862px;top:182.5px;" width="18" height="12" viewBox="0 0 18 12"><path d="M3 2.7 L9 8.7 L15 2.7" fill="none" stroke="#e0e0e0" stroke-width="2.4" stroke-linecap="round" stroke-linejoin="round"/></svg>
<div style="left:896px;top:168.5px;width:217.5px;height:37px;background:#222222;border-radius:8px;border:1.500px solid #3c3c3c;"></div>
<svg style="left:905px;top:173px;" width="29" height="29" viewBox="0 0 32 32"><rect x="9" y="9" width="14" height="14" fill="#e6e6e6"/><path d="M3 10 V3 H10 M22 3 H29 V10 M29 22 V29 H22 M10 29 H3 V22" fill="none" stroke="#e6e6e6" stroke-width="2.4"/></svg>
<div style="top:172.4px;height:30.7px;line-height:30.7px;font-size:23.6px;color:#e6e6e6;white-space:nowrap;left:947px;">Object Mode</div>
<svg style="left:1092px;top:182.5px;" width="18" height="12" viewBox="0 0 18 12"><path d="M3 2.7 L9 8.7 L15 2.7" fill="none" stroke="#e0e0e0" stroke-width="2.4" stroke-linecap="round" stroke-linejoin="round"/></svg>
<div style="top:172.4px;height:30.7px;line-height:30.7px;font-size:23.6px;color:#d6d6d6;white-space:nowrap;left:1141px;">View</div>
<div style="top:172.4px;height:30.7px;line-height:30.7px;font-size:23.6px;color:#d6d6d6;white-space:nowrap;left:1220px;">Select</div>
<div style="top:172.4px;height:30.7px;line-height:30.7px;font-size:23.6px;color:#d6d6d6;white-space:nowrap;left:1317.5px;">Add</div>
<div style="top:172.4px;height:30.7px;line-height:30.7px;font-size:23.6px;color:#d6d6d6;white-space:nowrap;left:1390.5px;">Object</div>
<div style="left:2177.5px;top:168.5px;width:157.5px;height:37px;background:#222222;border-radius:8px;border:1.500px solid #3c3c3c;"></div>
<svg style="left:2185px;top:173px;" width="30" height="30" viewBox="0 0 30 30"><g fill="none" stroke="#e6e6e6" stroke-width="2.300" stroke-linecap="round" stroke-linejoin="round"><path d="M7 3 V25 H29 M2.500 8 L7 3 L11.500 8 M24 20.500 L29 25 L24 29.500 M8 24 L22 9 M15.500 8.500 H22.500 V15.500"/></g></svg>
<div style="top:172.4px;height:30.7px;line-height:30.7px;font-size:23.6px;color:#e6e6e6;white-space:nowrap;left:2228.5px;">Global</div>
<svg style="left:2313px;top:182.5px;" width="18" height="12" viewBox="0 0 18 12"><path d="M3 2.7 L9 8.7 L15 2.7" fill="none" stroke="#e0e0e0" stroke-width="2.4" stroke-linecap="round" stroke-linejoin="round"/></svg>
<div style="left:2347px;top:168.5px;width:62.5px;height:37px;background:#222222;border-radius:8px;border:1.500px solid #3c3c3c;"></div>
<svg style="left:2355px;top:173px;" width="30" height="30" viewBox="0 0 30 30"><g fill="none" stroke="#e6e6e6" stroke-width="2.300"><circle cx="11" cy="19" r="8"/><path d="M12 8 A9 9 0 1 1 21 21"/></g><circle cx="14" cy="15" r="2.600" fill="#e6e6e6"/></svg>
<svg style="left:2387px;top:182.5px;" width="18" height="12" viewBox="0 0 18 12"><path d="M3 2.7 L9 8.7 L15 2.7" fill="none" stroke="#e0e0e0" stroke-width="2.4" stroke-linecap="round" stroke-linejoin="round"/></svg>
<div style="left:2420.5px;top:168.5px;width:103.0px;height:37px;background:#222222;border-radius:8px;border:1.500px solid #3c3c3c;overflow:hidden;"></div>
<div style="left:2422px;top:170px;width:37px;height:34px;background:rgba(110,110,110,.85);border-radius:6px 0 0 6px;"></div>
<svg style="left:2423.5px;top:170.5px;" width="34" height="34" viewBox="0 0 32 32"><path d="M6 12 L12 6 C20 2 30 10 25 19 C23 24 20 26 16 28 L12 24 C18 21 21 18 20 14 C19 10 14 10 10 16 Z" fill="none" stroke="#a8a8a8" stroke-width="2.400" stroke-linejoin="round"/></svg>
<svg style="left:2466px;top:174px;" width="28" height="28" viewBox="0 0 28 28"><rect x="13" y="0" width="8" height="8" fill="#e6e6e6"/><path d="M3 13 V27 M3 20 H25 M25 13 V27 M14 16 V24" stroke="#e6e6e6" stroke-width="2" fill="none"/></svg>
<svg style="left:2501px;top:182.5px;" width="18" height="12" viewBox="0 0 18 12"><path d="M3 2.7 L9 8.7 L15 2.7" fill="none" stroke="#e0e0e0" stroke-width="2.4" stroke-linecap="round" stroke-linejoin="round"/></svg>
<div style="left:2533.5px;top:168.5px;width:104.0px;height:37px;background:rgba(60,60,60,.75);border-radius:8px;border:1.500px solid rgba(60,60,60,.9);overflow:hidden;"></div>
<div style="left:2535px;top:170px;width:38px;height:34px;background:rgba(120,120,118,.8);border-radius:6px 0 0 6px;"></div>
<svg style="left:2539px;top:173px;" width="30" height="30" viewBox="0 0 30 30"><circle cx="15" cy="15.500" r="10.500" fill="none" stroke="#b5b5b5" stroke-width="2"/><circle cx="15" cy="15.500" r="3.500" fill="#d0d0d0"/></svg>
<svg style="left:2580px;top:174px;" width="32" height="28" viewBox="0 0 32 28"><path d="M2 26 C12 26 11 3 16 3 C21 3 20 26 30 26" fill="none" stroke="#c8c8c8" stroke-width="2.200"/></svg>
<svg style="left:2616px;top:183.5px;" width="16" height="10" viewBox="0 0 16 10"><path d="M3 2.2 L8 7.2 L13 2.2" fill="none" stroke="#8a8a8a" stroke-width="2.2" stroke-linecap="round" stroke-linejoin="round"/></svg>
<div style="left:3541px;top:168.5px;width:61px;height:37px;background:#222222;border-radius:8px;border:1.500px solid #3c3c3c;"></div>
<svg style="left:3547px;top:171px;" width="33" height="33" viewBox="0 0 33 33"><path d="M9 13 C13 5 25 5 30 13 C25 21 18 21 14 18" fill="#e6e6e6"/><circle cx="20" cy="12.500" r="4.500" fill="#222"/><circle cx="20" cy="12.500" r="2.200" fill="#e6e6e6"/><path d="M3 12 L17 19 L11 22 L9 30 Z" fill="#e6e6e6" stroke="#222" stroke-width="1"/></svg>
<svg style="left:3581px;top:182.5px;" width="18" height="12" viewBox="0 0 18 12"><path d="M3 2.7 L9 8.7 L15 2.7" fill="none" stroke="#e0e0e0" stroke-width="2.4" stroke-linecap="round" stroke-linejoin="round"/></svg>
<div style="left:3615px;top:168.5px;width:77.5px;height:37px;background:#222222;border-radius:8px;border:1.500px solid #3c3c3c;overflow:hidden;"></div>
<div style="left:3616.5px;top:170px;width:36.5px;height:34px;background:#4772b3;border-radius:6px 0 0 6px;"></div>
<svg style="left:3620px;top:173px;" width="30" height="30" viewBox="0 0 30 30"><g fill="none" stroke="#fff" stroke-width="2.400" stroke-linecap="round"><path d="M3 6 C16 6 24 15 25 28"/><path d="M20 10 L28 2 M20 2 H28 V10"/><path d="M8 22 L15 15"/><circle cx="6" cy="24.500" r="3.600"/></g></svg>
<svg style="left:3663.5px;top:182.5px;" width="18" height="12" viewBox="0 0 18 12"><path d="M3 2.7 L9 8.7 L15 2.7" fill="none" stroke="#e0e0e0" stroke-width="2.4" stroke-linecap="round" stroke-linejoin="round"/></svg>
<div style="left:3705.5px;top:168.5px;width:77.0px;height:37px;background:#222222;border-radius:8px;border:1.500px solid #3c3c3c;overflow:hidden;"></div>
<div style="left:3707px;top:170px;width:36px;height:34px;background:#4772b3;border-radius:6px 0 0 6px;"></div>
<svg style="left:3710px;top:173px;" width="30" height="30" viewBox="0 0 32 32"><circle cx="19" cy="12" r="9" fill="#fff"/><circle cx="12.500" cy="19" r="9" fill="none" stroke="#fff" stroke-width="2.4" stroke-dasharray="34 8"/></svg>
<svg style="left:3753.5px;top:182.5px;" width="18" height="12" viewBox="0 0 18 12"><path d="M3 2.7 L9 8.7 L15 2.7" fill="none" stroke="#e0e0e0" stroke-width="2.4" stroke-linecap="round" stroke-linejoin="round"/></svg>
<div style="left:3794.5px;top:168.5px;width:39.5px;height:37px;background:rgba(70,70,68,.8);border-radius:8px;border:1.500px solid rgba(60,60,60,.7);"></div>
<svg style="left:3801px;top:174px;" width="27" height="27" viewBox="0 0 27 27"><g fill="none" stroke="#8a8a8a" stroke-width="2"><path d="M9 7 V2 H25 V18 H20"/><rect x="2" y="9" width="16" height="16"/><rect x="7" y="14" width="6" height="6" stroke-dasharray="2 1.500"/></g></svg>
<div style="left:3844.5px;top:168.5px;width:193.0px;height:37px;background:rgba(84,84,82,.9);border-radius:8px;border:1.500px solid rgba(50,50,50,.8);overflow:hidden;"></div>
<div style="left:3922px;top:170px;width:38px;height:34px;background:#4772b3;"></div>
<div style="left:3999px;top:170px;width:37px;height:34px;background:#222;border-radius:0 6px 6px 0;"></div>
<div style="left:3883px;top:170px;width:1.5px;height:34px;background:rgba(45,45,45,.9);"></div>
<div style="left:3921.5px;top:170px;width:1.5px;height:34px;background:rgba(45,45,45,.9);"></div>
<div style="left:3960px;top:170px;width:1.5px;height:34px;background:rgba(45,45,45,.9);"></div>
<div style="left:3998.5px;top:170px;width:1.5px;height:34px;background:rgba(45,45,45,.9);"></div>
<svg style="left:3850px;top:173px;" width="30" height="30" viewBox="0 0 30 30"><g fill="none" stroke="#e0e0e0" stroke-width="2"><circle cx="15" cy="15" r="11.500"/><ellipse cx="15" cy="15" rx="5" ry="11.500"/><path d="M3.500 15 H26.500"/></g></svg>
<svg style="left:3888px;top:173px;" width="30" height="30" viewBox="0 0 30 30"><circle cx="15" cy="15" r="12" fill="#e0e0e0"/></svg>
<svg style="left:3926px;top:173px;" width="30" height="30" viewBox="0 0 30 30"><circle cx="15" cy="15" r="12" fill="none" stroke="#fff" stroke-width="2.200"/><path d="M15 3 A12 12 0 0 0 15 27 L15 15 L27 15 A12 12 0 0 0 15 3Z" fill="#fff"/><path d="M17 19 L24 23 M19 17 L26 19" stroke="#fff" stroke-width="1.500"/></svg>
<svg style="left:3964px;top:173px;" width="30" height="30" viewBox="0 0 30 30"><circle cx="15" cy="15" r="12" fill="none" stroke="#dadada" stroke-width="2.200"/><path d="M8 12 A8 8 0 0 1 15 6.500" stroke="#dadada" stroke-width="3" fill="none" stroke-linecap="round"/><path d="M22 14 A8 8 0 0 1 12 23" stroke="#dadada" stroke-width="2" fill="none" stroke-dasharray="2 2"/></svg>
<svg style="left:4008.5px;top:182.5px;" width="18" height="12" viewBox="0 0 18 12"><path d="M3 2.7 L9 8.7 L15 2.7" fill="none" stroke="#e0e0e0" stroke-width="2.4" stroke-linecap="round" stroke-linejoin="round"/></svg>
<svg style="left:833.5px;top:217.5px;" width="44" height="44" viewBox="0 0 44 44"><rect x="1.500" y="1.500" width="41" height="41" rx="3" fill="none" stroke="#f0a83a" stroke-width="2" stroke-dasharray="8 4.500"/><path d="M15 11 L33 24 L22 25.500 L15 34Z" fill="#e6e6e6"/></svg>
<div style="left:892.5px;top:219.5px;width:190.5px;height:39px;background:#4c4c4c;border-radius:8px;overflow:hidden;border:1.500px solid #3c3c3c;"></div>
<div style="left:894px;top:221px;width:36.5px;height:36px;background:#4772b3;border-radius:6px 0 0 6px;"></div>
<div style="left:930.5px;top:221px;width:1.5px;height:36px;background:#3a3a3a;"></div>
<div style="left:969px;top:221px;width:1.5px;height:36px;background:#3a3a3a;"></div>
<div style="left:1007px;top:221px;width:1.5px;height:36px;background:#3a3a3a;"></div>
<div style="left:1045px;top:221px;width:1.5px;height:36px;background:#3a3a3a;"></div>
<svg style="left:896px;top:223px;" width="32" height="32" viewBox="0 0 32 32"><rect x="3" y="3" width="26" height="26" fill="none" stroke="#fff" stroke-width="2.200" stroke-dasharray="4 3"/></svg>
<svg style="left:934px;top:223px;" width="32" height="32" viewBox="0 0 32 32"><path d="M12 3 H29 V20 H20 V29 H3 V12 H12Z" fill="#c8c8c8"/></svg>
<svg style="left:972.5px;top:223px;" width="32" height="32" viewBox="0 0 32 32"><path d="M14 3 H29 V18 H20 V12 H14Z" fill="#c8c8c8"/><rect x="3" y="12" width="17" height="17" fill="none" stroke="#c8c8c8" stroke-width="2" stroke-dasharray="4 3"/></svg>
<svg style="left:1010.5px;top:223px;" width="32" height="32" viewBox="0 0 32 32"><path d="M12 3 H29 V20 H12Z M3 12 H20 V29 H3Z" fill="#c8c8c8" fill-rule="evenodd"/><rect x="12" y="12" width="8" height="8" fill="#4c4c4c"/></svg>
<svg style="left:1048.5px;top:223px;" width="32" height="32" viewBox="0 0 32 32"><rect x="3" y="3" width="26" height="26" fill="none" stroke="#c8c8c8" stroke-width="2" stroke-dasharray="4 3"/><rect x="10" y="10" width="12" height="12" fill="#c8c8c8"/></svg>
<div style="left:3909.5px;top:220.5px;width:128.5px;height:37.5px;background:#222222;border-radius:8px;border:1.500px solid #3c3c3c;"></div>
<div style="top:224.4px;height:30.7px;line-height:30.7px;font-size:23.6px;color:#e6e6e6;white-space:nowrap;left:3924.5px;">Options</div>
<svg style="left:4017px;top:234.5px;" width="18" height="12" viewBox="0 0 18 12"><path d="M3 2.7 L9 8.7 L15 2.7" fill="none" stroke="#e0e0e0" stroke-width="2.4" stroke-linecap="round" stroke-linejoin="round"/></svg>
<div style="top:282.4px;height:30.7px;line-height:30.7px;font-size:23.6px;color:#f0f0f0;white-space:nowrap;left:824.5px;text-shadow:0 0 3px rgba(0,0,0,.55),1px 1px 2px rgba(0,0,0,.6);">User Perspective</div>
<div style="top:318.3px;height:29.9px;line-height:29.9px;font-size:23.0px;color:#f0f0f0;white-space:nowrap;left:824.5px;text-shadow:0 0 3px rgba(0,0,0,.55),1px 1px 2px rgba(0,0,0,.6);">(1) Scene Collection | Tütchen_rissc_mappes</div>
<div style="left:806px;top:295px;width:14px;height:27px;background:rgba(150,150,145,.55);border-radius:0 6px 6px 0;"></div>
<svg style="left:806px;top:298.5px;" width="14" height="20" viewBox="0 0 14 20"><path d="M3.9 3 L10.5 10 L3.9 17" fill="none" stroke="#d4d4d4" stroke-width="2.4" stroke-linecap="round" stroke-linejoin="round"/></svg>
<div style="left:4039px;top:294px;width:14px;height:28px;background:rgba(70,70,66,.6);border-radius:6px 0 0 6px;"></div>
<svg style="left:4039px;top:298px;" width="14" height="20" viewBox="0 0 14 20"><path d="M10.2 3 L3.5 10 L10.2 17" fill="none" stroke="#9a9a9a" stroke-width="2.4" stroke-linecap="round" stroke-linejoin="round"/></svg>
<svg style="left:0px;top:0px;" width="4962" height="2948" viewBox="0 0 4962 2948"><circle cx="3907" cy="357" r="13" fill="#c02040"/><circle cx="3997" cy="355" r="13" fill="#6c9a1e"/><path d="M3954 301 V366" stroke="#2f7fdf" stroke-width="4"/><path d="M3909 368 L3954 366" stroke="#7ec31f" stroke-width="4"/><path d="M3925 365 L3954 366" stroke="#d33a52" stroke-width="3"/><circle cx="3953.800" cy="428.800" r="14.500" fill="#3a5a8c" stroke="#2f7fdf" stroke-width="2.500"/><circle cx="3999.700" cy="368" r="15" fill="#7b3440" stroke="#f0364f" stroke-width="2.500"/><circle cx="3909" cy="368" r="16.500" fill="#7fc414"/><circle cx="3953.800" cy="300.700" r="15.500" fill="#2c7be0"/><text x="3909" y="376" font-size="22" font-weight="700" text-anchor="middle" fill="#111">Y</text><text x="3953.800" y="308.500" font-size="21" font-weight="700" text-anchor="middle" fill="#111">Z</text></svg>
<div style="left:3981.2px;top:447.2px;width:55px;height:55px;background:rgba(70,70,66,.62);border-radius:28px;"></div>
<svg style="left:3992.7px;top:458.7px;" width="32" height="32" viewBox="0 0 32 32"><circle cx="19" cy="12.500" r="10" fill="#fff"/><path d="M12 20 L3.500 28.500" stroke="#fff" stroke-width="4" stroke-linecap="round"/><path d="M19 7.500 V17.500 M14 12.500 H24" stroke="#444" stroke-width="2.2"/></svg>
<div style="left:3981.2px;top:507.0px;width:55px;height:55px;background:rgba(70,70,66,.62);border-radius:28px;"></div>
<svg style="left:3992.7px;top:518.5px;" width="32" height="32" viewBox="0 0 32 32"><path d="M9 17 V8 a1.800 1.800 0 0 1 3.600 0 V14 V5 a1.800 1.800 0 0 1 3.600 0 V14 V6 a1.800 1.800 0 0 1 3.600 0 V15 V9.500 a1.800 1.800 0 0 1 3.600 0 V20 C23.400 26 20 29 15.500 29 C11 29 9 27 6.500 23 L3 17.500 a1.900 1.900 0 0 1 3.200 -2 Z" fill="#fff"/></svg>
<div style="left:3981.2px;top:567.3px;width:55px;height:55px;background:rgba(70,70,66,.62);border-radius:28px;"></div>
<svg style="left:3992.7px;top:578.8px;" width="32" height="32" viewBox="0 0 32 32"><circle cx="9" cy="8" r="5.500" fill="#fff"/><circle cx="21" cy="8" r="5.500" fill="#fff"/><circle cx="9" cy="8" r="2" fill="#444"/><circle cx="21" cy="8" r="2" fill="#444"/><path d="M4 14.500 H22 V27 H4 Z M22 18 L29 14.500 V27 L22 23.500Z" fill="#fff"/></svg>
<div style="left:3981.2px;top:627.2px;width:55px;height:55px;background:rgba(70,70,66,.62);border-radius:28px;"></div>
<svg style="left:3992.7px;top:638.7px;" width="32" height="32" viewBox="0 0 32 32"><path d="M8 4 H24 L30 28 H2 Z" fill="none" stroke="#fff" stroke-width="2.400" stroke-linejoin="round"/><path d="M13.300 4 L11 28 M18.700 4 L21 28 M6.300 11 H25.700 M4.300 19 H27.700" stroke="#fff" stroke-width="2.200" fill="none"/></svg>
</div></div>
<div style="left:4060px;top:162px;width:831px;height:465px;background:#282828;border-radius:9px;overflow:hidden;"><div style="left:0;top:0;width:831px;height:54px;background:#282828"></div><div style="left:0;top:54px;width:831px;height:40px;background:#282828"></div><div style="left:0;top:94px;width:831px;height:40px;background:#2b2b2b"></div><div style="left:0;top:134px;width:831px;height:40px;background:#282828"></div><div style="left:0;top:174px;width:831px;height:40px;background:#2b2b2b"></div><div style="left:0;top:214px;width:831px;height:40px;background:#282828"></div><div style="left:0;top:254px;width:831px;height:40px;background:#2b2b2b"></div><div style="left:0;top:294px;width:831px;height:40px;background:#282828"></div><div style="left:0;top:334px;width:831px;height:40px;background:#2b2b2b"></div><div style="left:0;top:374px;width:831px;height:40px;background:#282828"></div><div style="left:0;top:414px;width:831px;height:40px;background:#2b2b2b"></div><div style="left:0;top:454px;width:831px;height:40px;background:#282828"></div></div>
<div style="left:4076px;top:168.5px;width:62px;height:37px;background:#282828;border-radius:8px;border:1.500px solid #3e3e3e;"></div>
<svg style="left:4083px;top:173px;" width="30" height="30" viewBox="0 0 30 30"><rect x="2" y="3" width="8" height="6" fill="#e6e6e6"/><path d="M6 9 V25 H14 M6 16 H14" stroke="#e6e6e6" stroke-width="2" fill="none"/><rect x="15" y="12" width="13" height="6" fill="#e6e6e6"/><rect x="15" y="22" width="13" height="6" fill="#e6e6e6"/></svg>
<svg style="left:4116px;top:182.5px;" width="18" height="12" viewBox="0 0 18 12"><path d="M3 2.7 L9 8.7 L15 2.7" fill="none" stroke="#e0e0e0" stroke-width="2.4" stroke-linecap="round" stroke-linejoin="round"/></svg>
<div style="left:4150px;top:168.5px;width:62.5px;height:37px;background:#282828;border-radius:8px;border:1.500px solid #3e3e3e;"></div>
<svg style="left:4158px;top:172.5px;" width="30" height="30" viewBox="0 0 32 32"><path d="M10 3 H29 V22 H10 Z" fill="#e6e6e6"/><path d="M12 20 L17.5 10 L21 16 L23 13.500 L27 20 Z" fill="#222"/><circle cx="24" cy="8" r="2" fill="#222"/><path d="M7 8 V25 H24 M3.500 12 V28.5 H20" fill="none" stroke="#e6e6e6" stroke-width="2.2"/></svg>
<svg style="left:4191px;top:182.5px;" width="18" height="12" viewBox="0 0 18 12"><path d="M3 2.7 L9 8.7 L15 2.7" fill="none" stroke="#e0e0e0" stroke-width="2.4" stroke-linecap="round" stroke-linejoin="round"/></svg>
<div style="left:4340px;top:168.5px;width:229px;height:37px;background:#1d1d1d;border-radius:8px;border:1.500px solid #3a3a3a;"></div>
<svg style="left:4347px;top:172px;" width="31" height="31" viewBox="0 0 32 32"><g fill="none" stroke="#e0e0e0" stroke-width="2.6" stroke-linecap="round"><circle cx="19" cy="12.5" r="8.5"/><path d="M13 19 L4 28.500"/></g></svg>
<div style="left:4764.5px;top:168.5px;width:62.5px;height:37px;background:#282828;border-radius:8px;border:1.500px solid #3e3e3e;"></div>
<svg style="left:4771px;top:173px;" width="29" height="29" viewBox="0 0 32 32"><path d="M3 4 H29 L19 16 V28 L13 25 V16 Z" fill="none" stroke="#e6e6e6" stroke-width="2.4" stroke-linejoin="round"/></svg>
<svg style="left:4805px;top:182.5px;" width="18" height="12" viewBox="0 0 18 12"><path d="M3 2.7 L9 8.7 L15 2.7" fill="none" stroke="#e0e0e0" stroke-width="2.4" stroke-linecap="round" stroke-linejoin="round"/></svg>
<div style="left:4839.5px;top:168.5px;width:37.5px;height:37px;background:#545454;border-radius:8px;border:1.500px solid #3e3e3e;"></div>
<svg style="left:4844px;top:173px;" width="29" height="29" viewBox="0 0 29 29"><path d="M3 8 H20 V13 H3Z M5 15 H24 V29 H5Z" fill="none" stroke="#c8c8c8" stroke-width="2.200"/><rect x="10" y="19" width="8" height="3" fill="#c8c8c8"/><circle cx="24.500" cy="7.500" r="6.500" fill="#e8e8e8"/><path d="M24.500 3.500 V11.500 M20.500 7.500 H28.500" stroke="#444" stroke-width="2"/></svg>
<div style="left:4100px;top:216.3px;width:39px;height:39px;background:#555555;border-radius:7px;border:1.500px solid #686868;"></div>
<svg style="left:4105px;top:221.5px;" width="29" height="29" viewBox="0 0 32 32"><path d="M1.500 3 H30.500 V10 H1.500Z M4 12 H28 V29 H4Z" fill="#f0f0f0"/><rect x="12" y="16" width="8" height="3.500" rx="1.700" fill="#555"/></svg>
<div style="top:220.9px;height:30.4px;line-height:30.4px;font-size:23.4px;color:#dcdcdc;white-space:nowrap;left:4147.5px;">Scene Collection</div>
<svg style="left:4110.5px;top:269px;" width="14" height="12" viewBox="0 0 14 12"><path d="M1 1 H13 L7 11.500Z" fill="#c8c8c8"/></svg>
<svg style="left:4144.5px;top:261px;" width="29" height="29" viewBox="0 0 32 32"><path d="M1.500 3 H30.500 V10 H1.500Z M4 12 H28 V29 H4Z" fill="#f0f0f0"/><rect x="12" y="16" width="8" height="3.500" rx="1.700" fill="#2b2b2b"/></svg>
<div style="top:260.8px;height:30.4px;line-height:30.4px;font-size:23.4px;color:#dcdcdc;white-space:nowrap;left:4187.5px;">Collection</div>
<svg style="left:4762px;top:264px;" width="22" height="22" viewBox="0 0 22 22"><rect x="0" y="0" width="22" height="22" rx="3" fill="#f0f0f0"/><path d="M4.500 11 L9 16 L17.500 5.500" stroke="#2b2b2b" stroke-width="3" fill="none"/></svg>
<svg style="left:4797px;top:259.5px;" width="30" height="30" viewBox="0 0 32 32"><path d="M2 16 C8 6 24 6 30 16 C24 26 8 26 2 16Z" fill="#f0f0f0"/><circle cx="16" cy="16" r="6.500" fill="#2b2b2b"/><circle cx="16" cy="16" r="3.200" fill="#f0f0f0"/></svg>
<svg style="left:4837.5px;top:259.0px;" width="29" height="29" viewBox="0 0 32 32"><path d="M3 8 H9 L11 4.500 H21 L23 8 H29 V27 H3 Z" fill="#f0f0f0"/><circle cx="16" cy="17" r="7" fill="#2b2b2b"/><circle cx="16" cy="17" r="4.200" fill="none" stroke="#f0f0f0" stroke-width="2.2"/></svg>
<svg style="left:4150.8px;top:309px;" width="14" height="12" viewBox="0 0 14 12"><path d="M1 1 H13 L7 11.500Z" fill="#c8c8c8"/></svg>
<div style="left:4180px;top:296.1px;width:39px;height:39px;background:#555555;border-radius:7px;border:1.500px solid #686868;"></div>
<svg style="left:4186px;top:302px;" width="27" height="27" viewBox="0 0 27 27"><path d="M3.500 4 H23.500 L13.500 23.500Z" fill="none" stroke="#d88a4e" stroke-width="5.500" stroke-linejoin="round"/></svg>
<div style="top:301.1px;height:29.6px;line-height:29.6px;font-size:22.8px;color:#dcdcdc;white-space:nowrap;left:4227.5px;">Tütchen_rissc_mappes</div>
<svg style="left:4797px;top:299.5px;" width="30" height="30" viewBox="0 0 32 32"><path d="M2 16 C8 6 24 6 30 16 C24 26 8 26 2 16Z" fill="#f0f0f0"/><circle cx="16" cy="16" r="6.500" fill="#282828"/><circle cx="16" cy="16" r="3.200" fill="#f0f0f0"/></svg>
<svg style="left:4837.5px;top:299.0px;" width="29" height="29" viewBox="0 0 32 32"><path d="M3 8 H9 L11 4.500 H21 L23 8 H29 V27 H3 Z" fill="#f0f0f0"/><circle cx="16" cy="17" r="7" fill="#282828"/><circle cx="16" cy="17" r="4.200" fill="none" stroke="#f0f0f0" stroke-width="2.2"/></svg>
<svg style="left:4190.7px;top:349px;" width="14" height="12" viewBox="0 0 14 12"><path d="M1 1 H13 L7 11.500Z" fill="#c8c8c8"/></svg>
<svg style="left:4224.5px;top:341px;" width="30" height="30" viewBox="0 0 32 32"><path d="M6 6 H26 L16 26 Z" fill="none" stroke="#14c8a0" stroke-width="2.4"/><rect x="2.500" y="2.5" width="7" height="7" fill="#2b2b2b" stroke="#14c8a0" stroke-width="2"/><rect x="22.500" y="2.500" width="7" height="7" fill="#2b2b2b" stroke="#14c8a0" stroke-width="2"/><rect x="12.5" y="22.500" width="7" height="7" fill="#2b2b2b" stroke="#14c8a0" stroke-width="2"/></svg>
<div style="top:341.0px;height:29.6px;line-height:29.6px;font-size:22.8px;color:#dcdcdc;white-space:nowrap;left:4267.5px;">Tütchen_rissc_mappes</div>
<div style="left:4259.5px;top:375.9px;width:39px;height:39px;background:#555555;border-radius:7px;border:1.500px solid #686868;"></div>
<svg style="left:4263px;top:379.5px;" width="32" height="32" viewBox="0 0 32 32"><circle cx="16" cy="16" r="12" fill="none" stroke="#c25b66" stroke-width="2.4"/><path d="M16 4 A12 12 0 0 0 4 16 H16 Z M16 28 A12 12 0 0 0 28 16 H16Z" fill="#c25b66"/></svg>
<div style="top:380.7px;height:29.9px;line-height:29.9px;font-size:23.0px;color:#dcdcdc;white-space:nowrap;left:4307.5px;">OUTMAT1</div>
<div style="left:4117px;top:304px;width:1.5px;height:99px;background:#4a4a4a;"></div>
<div style="left:4060px;top:635px;width:831px;height:2186px;background:#303030;border-radius:9px;overflow:hidden;"><div style="left:0;top:51px;width:57px;height:2200px;background:#1c1c1c"></div></div>
<div style="left:4076px;top:641px;width:62px;height:37px;background:#282828;border-radius:8px;border:1.500px solid #3e3e3e;"></div>
<svg style="left:4083px;top:645px;" width="30" height="30" viewBox="0 0 30 30"><rect x="3" y="4" width="20" height="10" rx="5" fill="#e6e6e6"/><rect x="3" y="17" width="20" height="10" rx="5" fill="none" stroke="#e6e6e6" stroke-width="2.200"/><path d="M23 9 H27 V22 H23" stroke="#e6e6e6" stroke-width="2" fill="none"/></svg>
<svg style="left:4116px;top:655px;" width="18" height="12" viewBox="0 0 18 12"><path d="M3 2.7 L9 8.7 L15 2.7" fill="none" stroke="#e0e0e0" stroke-width="2.4" stroke-linecap="round" stroke-linejoin="round"/></svg>
<div style="left:4365px;top:641px;width:229px;height:37px;background:#1d1d1d;border-radius:8px;border:1.500px solid #3a3a3a;"></div>
<svg style="left:4372px;top:644.5px;" width="31" height="31" viewBox="0 0 32 32"><g fill="none" stroke="#e0e0e0" stroke-width="2.6" stroke-linecap="round"><circle cx="19" cy="12.5" r="8.5"/><path d="M13 19 L4 28.500"/></g></svg>
<div style="left:4839.5px;top:641px;width:37.5px;height:37px;background:#282828;border-radius:8px;border:1.500px solid #3e3e3e;"></div>
<svg style="left:4849px;top:655px;" width="18" height="12" viewBox="0 0 18 12"><path d="M3 2.7 L9 8.7 L15 2.7" fill="none" stroke="#e0e0e0" stroke-width="2.4" stroke-linecap="round" stroke-linejoin="round"/></svg>
<div style="left:4065px;top:999px;width:52px;height:53px;background:#303030;border-radius:8px 0 0 8px;"></div>
<svg style="left:4076px;top:710.5px;" width="30" height="30" viewBox="0 0 30 30"><path d="M4 6 V20 M2 20 H8 V29 H2Z" fill="#b8b8b8" stroke="#b8b8b8" stroke-width="2"/><path d="M20 29 V14 M14 3 V10 C14 14 26 14 26 10 V3" fill="none" stroke="#b8b8b8" stroke-width="3.600"/></svg>
<svg style="left:4076px;top:784.8px;" width="30" height="30" viewBox="0 0 30 30"><path d="M2 9 H28 V27 H2Z" fill="#b8b8b8"/><path d="M7 9 L10 3 H14 L12 9 M18 9 L20 3 H24 L26 6" fill="none" stroke="#b8b8b8" stroke-width="2.400"/><rect x="8" y="14" width="12" height="8" fill="#1c1c1c"/><path d="M22 14 H25 M22 18 H25 M22 22 H25" stroke="#1c1c1c" stroke-width="1.600"/></svg>
<svg style="left:4076px;top:841px;" width="30" height="30" viewBox="0 0 30 30"><path d="M2 2 H28 V12 H24 V28 H6 V12 H2Z" fill="#b8b8b8"/><rect x="9" y="13" width="12" height="12" fill="#1c1c1c"/><path d="M9 25 L13 17 L17 22 L18.500 20 L21 25Z" fill="#b8b8b8"/></svg>
<svg style="left:4076px;top:897px;" width="30" height="30" viewBox="0 0 30 30"><path d="M10 3 H29 V22 H10 Z" fill="#b8b8b8"/><path d="M12 20 L17.5 10 L21 16 L23 13.500 L27 20 Z" fill="#1c1c1c"/><circle cx="24" cy="8" r="2" fill="#1c1c1c"/><path d="M7 8 V25 H24 M3.500 12 V28.5 H20" fill="none" stroke="#b8b8b8" stroke-width="2.2"/></svg>
<svg style="left:4076px;top:952.5px;" width="30" height="30" viewBox="0 0 32 32"><path d="M10.500 2.500 C11.500 2.500 12 3.200 12.400 4.500 L17 20 C17.600 22.500 15 24.500 10.500 24.500 C6 24.500 3 22.500 3.800 20 L8.600 4.500 C9 3.200 9.500 2.500 10.500 2.500Z" fill="#b8b8b8"/><circle cx="25" cy="6.500" r="4" fill="#b8b8b8"/><circle cx="22.500" cy="22" r="6.500" fill="#303030" stroke="#b8b8b8" stroke-width="2.400"/><path d="M19.500 21 A3.500 3.500 0 0 1 22.500 18.500" stroke="#b8b8b8" stroke-width="1.800" fill="none" stroke-linecap="round"/></svg>
<svg style="left:4075px;top:1009px;" width="32" height="32" viewBox="0 0 32 32"><circle cx="16" cy="16.500" r="11.500" fill="none" stroke="#cc5868" stroke-width="2.400"/><path d="M9 9.500 C12 7.500 15.500 9 16 12 C16.500 15 13 16 12.500 19 C12 22 9.500 22 7.500 19.500 C6 16 6.500 12 9 9.500Z M18 22.500 C19.500 19.500 23 20 25 22 C23.500 25 21 26.500 18.500 27 C17.500 25.500 17.500 24 18 22.500Z" fill="#cc5868"/><path d="M24 8 L28.500 3.500 M8 25 L4 29" stroke="#cc5868" stroke-width="2.200" stroke-linecap="round"/></svg>
<svg style="left:4076px;top:1081.5px;" width="30" height="30" viewBox="0 0 30 30"><rect x="8" y="8" width="14" height="14" fill="#c9874f"/><path d="M2 9 V2 H9 M21 2 H28 V9 M28 21 V28 H21 M9 28 H2 V21" fill="none" stroke="#a87042" stroke-width="2.200"/></svg>
<svg style="left:4076px;top:1137.8px;" width="30" height="30" viewBox="0 0 30 30"><path d="M27 9 L21 15 L15.500 9.500 L21.500 3.500 C16 1.500 9.500 6 12 13 L2.500 22.500 a3.500 3.500 0 0 0 5 5 L17 18 C24 20.500 29 14 27 9Z" fill="#5c85cf"/></svg>
<svg style="left:4076px;top:1193.7px;" width="30" height="30" viewBox="0 0 30 30"><circle cx="5" cy="5" r="4" fill="#5c85cf"/><circle cx="25" cy="6" r="3" fill="#5c85cf"/><circle cx="25" cy="26" r="3.500" fill="#5c85cf"/><circle cx="5" cy="26" r="2.500" fill="#5c85cf"/><path d="M5 5 L25 26 M5 5 L25 6 M5 5 V26" stroke="#5c85cf" stroke-width="2.400" fill="none"/></svg>
<svg style="left:4076px;top:1249.5px;" width="30" height="30" viewBox="0 0 30 30"><path d="M26 12 A12 12 0 1 0 24 24" fill="none" stroke="#5c85cf" stroke-width="2.600"/><circle cx="14.500" cy="15" r="6" fill="#5c85cf"/><circle cx="26" cy="5" r="3.500" fill="#5c85cf"/></svg>
<svg style="left:4076px;top:1305.9px;" width="30" height="30" viewBox="0 0 30 30"><path d="M4 20 a9 9 0 0 0 18 2 L28 6 a4 4 0 0 0 -7 -3 L10 12 a9 9 0 0 0 -6 8Z" fill="none" stroke="#5c85cf" stroke-width="2.800"/><circle cx="12.500" cy="20" r="4" fill="none" stroke="#5c85cf" stroke-width="2.600"/></svg>
<svg style="left:4076px;top:1361.7px;" width="30" height="30" viewBox="0 0 30 30"><path d="M6 6 H26 L16 26 Z" fill="none" stroke="#14c8a0" stroke-width="2.4"/><rect x="2.500" y="2.5" width="7" height="7" fill="#1c1c1c" stroke="#14c8a0" stroke-width="2"/><rect x="22.500" y="2.500" width="7" height="7" fill="#1c1c1c" stroke="#14c8a0" stroke-width="2"/><rect x="12.5" y="22.500" width="7" height="7" fill="#1c1c1c" stroke="#14c8a0" stroke-width="2"/></svg>
<svg style="left:4076px;top:1418px;" width="30" height="30" viewBox="0 0 30 30"><circle cx="16" cy="16" r="12" fill="none" stroke="#b25964" stroke-width="2.4"/><path d="M16 4 A12 12 0 0 0 4 16 H16 Z M16 28 A12 12 0 0 0 28 16 H16Z" fill="#b25964"/></svg>
<svg style="left:4076px;top:1489px;" width="30" height="30" viewBox="0 0 30 30"><rect x="0" y="0" width="30" height="30" fill="#b5586a"/><rect x="1" y="1" width="7" height="7" fill="#b5586a"/><rect x="1" y="8" width="7" height="7" fill="#2a1216"/><rect x="1" y="15" width="7" height="7" fill="#b5586a"/><rect x="1" y="22" width="7" height="7" fill="#2a1216"/><rect x="8" y="1" width="7" height="7" fill="#2a1216"/><rect x="8" y="8" width="7" height="7" fill="#b5586a"/><rect x="8" y="15" width="7" height="7" fill="#2a1216"/><rect x="8" y="22" width="7" height="7" fill="#b5586a"/><rect x="15" y="1" width="7" height="7" fill="#b5586a"/><rect x="15" y="8" width="7" height="7" fill="#2a1216"/><rect x="15" y="15" width="7" height="7" fill="#b5586a"/><rect x="15" y="22" width="7" height="7" fill="#2a1216"/><rect x="22" y="1" width="7" height="7" fill="#2a1216"/><rect x="22" y="8" width="7" height="7" fill="#b5586a"/><rect x="22" y="15" width="7" height="7" fill="#2a1216"/><rect x="22" y="22" width="7" height="7" fill="#b5586a"/></svg>
<svg style="left:4138px;top:706.5px;" width="30" height="30" viewBox="0 0 32 32"><path d="M10.500 2.500 C11.500 2.500 12 3.200 12.400 4.500 L17 20 C17.600 22.500 15 24.500 10.500 24.500 C6 24.500 3 22.500 3.800 20 L8.600 4.500 C9 3.200 9.500 2.500 10.500 2.500Z" fill="#e0e0e0"/><circle cx="25" cy="6.500" r="4" fill="#e0e0e0"/><circle cx="22.500" cy="22" r="6.500" fill="#303030" stroke="#e0e0e0" stroke-width="2.400"/><path d="M19.500 21 A3.500 3.500 0 0 1 22.500 18.500" stroke="#e0e0e0" stroke-width="1.800" fill="none" stroke-linecap="round"/></svg>
<div style="top:706.6px;height:30.4px;line-height:30.4px;font-size:23.4px;color:#e0e0e0;white-space:nowrap;left:4186px;">Scene</div>
<svg style="left:4282px;top:712px;" width="14" height="20" viewBox="0 0 14 20"><path d="M3.9 3 L10.5 10 L3.9 17" fill="none" stroke="#d0d0d0" stroke-width="2.4" stroke-linecap="round" stroke-linejoin="round"/></svg>
<svg style="left:4312px;top:706px;" width="30" height="30" viewBox="0 0 32 32"><circle cx="16" cy="16.500" r="11.500" fill="none" stroke="#e0e0e0" stroke-width="2.400"/><path d="M9 9.500 C12 7.500 15.500 9 16 12 C16.500 15 13 16 12.500 19 C12 22 9.500 22 7.500 19.500 C6 16 6.500 12 9 9.500Z M18 22.500 C19.500 19.500 23 20 25 22 C23.500 25 21 26.500 18.500 27 C17.500 25.500 17.500 24 18 22.500Z" fill="#e0e0e0"/><path d="M24 8 L28.500 3.500 M8 25 L4 29" stroke="#e0e0e0" stroke-width="2.200" stroke-linecap="round"/></svg>
<div style="top:706.6px;height:30.4px;line-height:30.4px;font-size:23.4px;color:#e0e0e0;white-space:nowrap;left:4360.5px;">World</div>
<svg style="left:4842px;top:707px;" width="29" height="29" viewBox="0 0 32 32"><g fill="none" stroke="#9a9a9a" stroke-width="2.4" stroke-linejoin="round" stroke-linecap="round"><path d="M19 4 L28 13 L24.5 14.5 L19.5 19.5 L19 25 L7 13 L12.5 12.5 L17.5 7.5 Z"/><path d="M12.5 19.5 L4 28"/></g></svg>
<div style="left:4135px;top:774px;width:742px;height:38.5px;background:#282828;border-radius:8px;border:1.500px solid #3e3e3e;overflow:hidden;"><div style="left:61px;top:0;width:560px;height:40px;background:#1d1d1d"></div><div style="left:622px;top:0;width:38px;height:40px;background:#545454"></div><div style="left:661.500px;top:0;width:38.500px;height:40px;background:#545454"></div><div style="left:701.500px;top:0;width:40px;height:40px;background:#545454"></div></div>
<svg style="left:4142px;top:778px;" width="30" height="30" viewBox="0 0 32 32"><circle cx="16" cy="16.500" r="11.500" fill="none" stroke="#e6e6e6" stroke-width="2.400"/><path d="M9 9.500 C12 7.500 15.500 9 16 12 C16.500 15 13 16 12.500 19 C12 22 9.500 22 7.500 19.500 C6 16 6.500 12 9 9.500Z M18 22.500 C19.500 19.500 23 20 25 22 C23.500 25 21 26.500 18.500 27 C17.500 25.500 17.500 24 18 22.500Z" fill="#e6e6e6"/><path d="M24 8 L28.500 3.500 M8 25 L4 29" stroke="#e6e6e6" stroke-width="2.200" stroke-linecap="round"/></svg>
<svg style="left:4174px;top:788px;" width="18" height="12" viewBox="0 0 18 12"><path d="M3 2.7 L9 8.7 L15 2.7" fill="none" stroke="#e0e0e0" stroke-width="2.4" stroke-linecap="round" stroke-linejoin="round"/></svg>
<div style="top:778.6px;height:30.4px;line-height:30.4px;font-size:23.4px;color:#e6e6e6;white-space:nowrap;left:4211px;">World</div>
<svg style="left:4763px;top:779px;" width="28" height="28" viewBox="0 0 32 32"><path d="M16 3.5 C12 6 8 6.5 4.5 6.5 C4.5 16 7 24 16 28.5 C25 24 27.500 16 27.5 6.5 C24 6.5 20 6 16 3.500Z" fill="none" stroke="#a8a8a8" stroke-width="2.4" stroke-linejoin="round"/></svg>
<svg style="left:4802px;top:778px;" width="29" height="29" viewBox="0 0 32 32"><g fill="none" stroke="#e6e6e6" stroke-width="2.4" stroke-linejoin="round"><path d="M10 7 V3.5 H21 L28 10.5 V23 H10 V7"/><path d="M20.5 3.5 V11 H28" /><path d="M10 9 H4 V28.5 H21 V23"/></g></svg>
<svg style="left:4845px;top:782px;" width="23" height="23" viewBox="0 0 32 32"><path d="M8 8 L24 24 M24 8 L8 24" stroke="#e6e6e6" stroke-width="2.8" stroke-linecap="round" fill="none"/></svg>
<div style="left:4133px;top:833px;width:745px;height:316px;background:#3d3d3d;border-radius:8px;"></div>
<svg style="left:4147px;top:851px;" width="22" height="16" viewBox="0 0 22 16"><path d="M3 3.6 L11 11.6 L19 3.6" fill="none" stroke="#d8d8d8" stroke-width="2.2" stroke-linecap="round" stroke-linejoin="round"/></svg>
<div style="top:843.8px;height:30.4px;line-height:30.4px;font-size:23.4px;color:#e6e6e6;white-space:nowrap;left:4177.5px;">Surface</div>
<svg style="left:4842px;top:853px;" width="22" height="10" viewBox="0 0 22 10"><rect x="0" y="0" width="2.500" height="2.500" fill="#808080"/><rect x="0" y="6" width="2.500" height="2.500" fill="#808080"/><rect x="6" y="0" width="2.500" height="2.500" fill="#808080"/><rect x="6" y="6" width="2.500" height="2.500" fill="#808080"/><rect x="12" y="0" width="2.500" height="2.500" fill="#808080"/><rect x="12" y="6" width="2.500" height="2.500" fill="#808080"/><rect x="18" y="0" width="2.500" height="2.500" fill="#808080"/><rect x="18" y="6" width="2.500" height="2.500" fill="#808080"/></svg>
<div class="btn" style="left:4151.5px;top:901px;width:708.5px;height:36px;background:#4772b3;border-radius:7px;"></div>
<svg style="left:4158px;top:904px;" width="32" height="30" viewBox="0 0 32 30"><rect x="5" y="3" width="14" height="9" rx="2" fill="#fff"/><rect x="2" y="17" width="14" height="10" rx="2" fill="#fff"/><path d="M19 7 H25 V22 H16" fill="none" stroke="#fff" stroke-width="2"/></svg>
<div style="top:904.1px;height:30.4px;line-height:30.4px;font-size:23.4px;color:#fff;white-space:nowrap;left:3523px;width:2000px;text-align:center;">Use Nodes</div>
<div style="top:975.9px;height:30.4px;line-height:30.4px;font-size:23.4px;color:#e0e0e0;white-space:nowrap;left:2408.5px;width:2000px;text-align:right;">Surface</div>
<div class="btn" style="left:4429px;top:973px;width:391px;height:36.5px;background:#1d1d1d;border-radius:7px;"></div>
<div style="left:4438.5px;top:982.3px;width:17px;height:17px;background:#62c862;border-radius:9px;border:1.500px solid #222;"></div>
<div style="top:975.9px;height:30.4px;line-height:30.4px;font-size:23.4px;color:#e6e6e6;white-space:nowrap;left:4470.5px;">Background</div>
<div style="top:1048.1px;height:30.4px;line-height:30.4px;font-size:23.4px;color:#e0e0e0;white-space:nowrap;left:2408.5px;width:2000px;text-align:right;">Color</div>
<div class="btn" style="left:4429px;top:1045px;width:391px;height:36.5px;background:#383838;border-radius:7px;overflow:hidden;"><div style="left:0;top:0;width:36px;height:37px;background:#222"></div></div>
<div style="left:4438.5px;top:1054.5px;width:17px;height:17px;background:#c8c829;border-radius:9px;border:1.500px solid #1a1a1a;"></div>
<div style="left:4838px;top:1059.5px;width:8px;height:8px;background:#d8d8d8;border-radius:4px;"></div>
<div style="top:1098.1px;height:30.4px;line-height:30.4px;font-size:23.4px;color:#e0e0e0;white-space:nowrap;left:2408.5px;width:2000px;text-align:right;">Strength</div>
<div class="btn" style="left:4429px;top:1095px;width:391px;height:36.5px;background:#545454;border-radius:7px;overflow:hidden;"><div style="left:0;top:0;width:36px;height:37px;background:#222"></div></div>
<div style="left:4438.5px;top:1104.5px;width:17px;height:17px;background:#a1a1a1;border-radius:9px;border:1.500px solid #1a1a1a;"></div>
<div style="top:1098.1px;height:30.4px;line-height:30.4px;font-size:23.4px;color:#e6e6e6;white-space:nowrap;letter-spacing:0.5px;left:3643.5px;width:2000px;text-align:center;">1.000</div>
<div style="left:4838px;top:1109.5px;width:8px;height:8px;background:#d8d8d8;border-radius:4px;"></div>
<div style="left:4133px;top:1154px;width:745px;height:48.5px;background:#3d3d3d;border-radius:8px;"></div>
<svg style="left:4151.5px;top:1167.5px;" width="16" height="22" viewBox="0 0 16 22"><path d="M4.4 3 L12.0 11 L4.4 19" fill="none" stroke="#d8d8d8" stroke-width="2.2" stroke-linecap="round" stroke-linejoin="round"/></svg>
<div style="top:1163.6px;height:30.4px;line-height:30.4px;font-size:23.4px;color:#e6e6e6;white-space:nowrap;left:4177.5px;">Volume</div>
<svg style="left:4842px;top:1173px;" width="22" height="10" viewBox="0 0 22 10"><rect x="0" y="0" width="2.500" height="2.500" fill="#808080"/><rect x="0" y="6" width="2.500" height="2.500" fill="#808080"/><rect x="6" y="0" width="2.500" height="2.500" fill="#808080"/><rect x="6" y="6" width="2.500" height="2.500" fill="#808080"/><rect x="12" y="0" width="2.500" height="2.500" fill="#808080"/><rect x="12" y="6" width="2.500" height="2.500" fill="#808080"/><rect x="18" y="0" width="2.500" height="2.500" fill="#808080"/><rect x="18" y="6" width="2.500" height="2.500" fill="#808080"/></svg>
<div style="left:4133px;top:1208px;width:745px;height:48.5px;background:#3d3d3d;border-radius:8px;"></div>
<svg style="left:4151.5px;top:1221.5px;" width="16" height="22" viewBox="0 0 16 22"><path d="M4.4 3 L12.0 11 L4.4 19" fill="none" stroke="#d8d8d8" stroke-width="2.2" stroke-linecap="round" stroke-linejoin="round"/></svg>
<div style="top:1217.6px;height:30.4px;line-height:30.4px;font-size:23.4px;color:#e6e6e6;white-space:nowrap;left:4177.5px;">Mist Pass</div>
<svg style="left:4842px;top:1227px;" width="22" height="10" viewBox="0 0 22 10"><rect x="0" y="0" width="2.500" height="2.500" fill="#808080"/><rect x="0" y="6" width="2.500" height="2.500" fill="#808080"/><rect x="6" y="0" width="2.500" height="2.500" fill="#808080"/><rect x="6" y="6" width="2.500" height="2.500" fill="#808080"/><rect x="12" y="0" width="2.500" height="2.500" fill="#808080"/><rect x="12" y="6" width="2.500" height="2.500" fill="#808080"/><rect x="18" y="0" width="2.500" height="2.500" fill="#808080"/><rect x="18" y="6" width="2.500" height="2.500" fill="#808080"/></svg>
<div style="left:4133px;top:1262px;width:745px;height:48.5px;background:#3d3d3d;border-radius:8px;"></div>
<svg style="left:4151.5px;top:1275.5px;" width="16" height="22" viewBox="0 0 16 22"><path d="M4.4 3 L12.0 11 L4.4 19" fill="none" stroke="#d8d8d8" stroke-width="2.2" stroke-linecap="round" stroke-linejoin="round"/></svg>
<div style="top:1271.6px;height:30.4px;line-height:30.4px;font-size:23.4px;color:#e6e6e6;white-space:nowrap;left:4177.5px;">Viewport Display</div>
<svg style="left:4842px;top:1281px;" width="22" height="10" viewBox="0 0 22 10"><rect x="0" y="0" width="2.500" height="2.500" fill="#808080"/><rect x="0" y="6" width="2.500" height="2.500" fill="#808080"/><rect x="6" y="0" width="2.500" height="2.500" fill="#808080"/><rect x="6" y="6" width="2.500" height="2.500" fill="#808080"/><rect x="12" y="0" width="2.500" height="2.500" fill="#808080"/><rect x="12" y="6" width="2.500" height="2.500" fill="#808080"/><rect x="18" y="0" width="2.500" height="2.500" fill="#808080"/><rect x="18" y="6" width="2.500" height="2.500" fill="#808080"/></svg>
<div style="left:4133px;top:1316px;width:745px;height:48.5px;background:#3d3d3d;border-radius:8px;"></div>
<svg style="left:4151.5px;top:1329.5px;" width="16" height="22" viewBox="0 0 16 22"><path d="M4.4 3 L12.0 11 L4.4 19" fill="none" stroke="#d8d8d8" stroke-width="2.2" stroke-linecap="round" stroke-linejoin="round"/></svg>
<div style="top:1325.6px;height:30.4px;line-height:30.4px;font-size:23.4px;color:#e6e6e6;white-space:nowrap;left:4177.5px;">Custom Properties</div>
<svg style="left:4842px;top:1335px;" width="22" height="10" viewBox="0 0 22 10"><rect x="0" y="0" width="2.500" height="2.500" fill="#808080"/><rect x="0" y="6" width="2.500" height="2.500" fill="#808080"/><rect x="6" y="0" width="2.500" height="2.500" fill="#808080"/><rect x="6" y="6" width="2.500" height="2.500" fill="#808080"/><rect x="12" y="0" width="2.500" height="2.500" fill="#808080"/><rect x="12" y="6" width="2.500" height="2.500" fill="#808080"/><rect x="18" y="0" width="2.500" height="2.500" fill="#808080"/><rect x="18" y="6" width="2.500" height="2.500" fill="#808080"/></svg>
<div style="left:70px;top:1677px;width:729px;height:1144px;background:#333333;border-radius:9px;overflow:hidden;"><div style="left:0;top:0;width:729px;height:50px;background:#303030"></div></div>
<div style="left:85px;top:1683px;width:62px;height:38px;background:#282828;border-radius:8px;border:1.500px solid #3e3e3e;"></div>
<svg style="left:93px;top:1688px;" width="28" height="28" viewBox="0 0 28 28"><path d="M2 2 H27 V27 H2Z" fill="none" stroke="#e6e6e6" stroke-width="2.200"/><path d="M2 2 H27 V16 H22 V20 a2.500 2.500 0 0 1 -5 0 V10 H13 V14 a2.500 2.500 0 0 1 -5 0 V8 H2Z" fill="#e6e6e6"/></svg>
<svg style="left:125.5px;top:1697px;" width="18" height="12" viewBox="0 0 18 12"><path d="M3 2.7 L9 8.7 L15 2.7" fill="none" stroke="#e0e0e0" stroke-width="2.4" stroke-linecap="round" stroke-linejoin="round"/></svg>
<div style="left:158.5px;top:1683px;width:135.0px;height:38px;background:#282828;border-radius:8px;border:1.500px solid #3e3e3e;"></div>
<svg style="left:167px;top:1688px;" width="28" height="28" viewBox="0 0 32 32"><path d="M4 3 H28 V29 H4 Z" fill="none" stroke="#e6e6e6" stroke-width="2.2"/><path d="M4 29 L13 12 L20 24 L23 20 L28 29 Z" fill="#e6e6e6"/><circle cx="21.5" cy="10" r="2.6" fill="#e6e6e6"/></svg>
<div style="top:1686.9px;height:30.7px;line-height:30.7px;font-size:23.6px;color:#e0e0e0;white-space:nowrap;left:210.5px;">View</div>
<svg style="left:272px;top:1697px;" width="18" height="12" viewBox="0 0 18 12"><path d="M3 2.7 L9 8.7 L15 2.7" fill="none" stroke="#e0e0e0" stroke-width="2.4" stroke-linecap="round" stroke-linejoin="round"/></svg>
<svg style="left:309px;top:1690px;" width="30" height="26" viewBox="0 0 30 26"><path d="M1 3 H29 M1 13 H29 M1 23 H29" stroke="#e0e0e0" stroke-width="3" stroke-linecap="round"/></svg>
<div style="left:377px;top:1683px;width:301.5px;height:38px;background:#282828;border-radius:8px;border:1.500px solid #3e3e3e;overflow:hidden;"><div style="left:61.500px;top:0;width:119px;height:40px;background:#545454"></div><div style="left:182px;top:0;width:120px;height:40px;background:#545454"></div></div>
<svg style="left:385px;top:1688px;" width="28" height="28" viewBox="0 0 32 32"><path d="M4 3 H28 V29 H4 Z" fill="none" stroke="#e6e6e6" stroke-width="2.2"/><path d="M4 29 L13 12 L20 24 L23 20 L28 29 Z" fill="#e6e6e6"/><circle cx="21.5" cy="10" r="2.6" fill="#e6e6e6"/></svg>
<svg style="left:417.5px;top:1697px;" width="18" height="12" viewBox="0 0 18 12"><path d="M3 2.7 L9 8.7 L15 2.7" fill="none" stroke="#e0e0e0" stroke-width="2.4" stroke-linecap="round" stroke-linejoin="round"/></svg>
<svg style="left:453px;top:1692px;" width="19" height="19" viewBox="0 0 19 19"><path d="M9.500 1 V18 M1 9.500 H18" stroke="#e6e6e6" stroke-width="2.200" fill="none"/></svg>
<div style="top:1686.9px;height:30.7px;line-height:30.7px;font-size:23.6px;color:#e0e0e0;white-space:nowrap;left:493.5px;">New</div>
<svg style="left:566px;top:1687px;" width="30" height="30" viewBox="0 0 32 32"><path d="M3 5 H13 L15 8 H29 V11 H3 Z M3 13 H29 V28 H3 Z" fill="#e6e6e6"/></svg>
<div style="top:1686.9px;height:30.7px;line-height:30.7px;font-size:23.6px;color:#e0e0e0;white-space:nowrap;left:609.5px;">Open</div>
<svg style="left:696px;top:1687px;" width="29" height="29" viewBox="0 0 32 32"><g fill="none" stroke="#aaaaaa" stroke-width="2.4" stroke-linejoin="round" stroke-linecap="round"><path d="M19 4 L28 13 L24.5 14.5 L19.5 19.5 L19 25 L7 13 L12.5 12.5 L17.5 7.5 Z"/><path d="M12.5 19.5 L4 28"/></g></svg>
<div style="left:764px;top:1684.5px;width:35px;height:36px;background:#4772b3;border-radius:8px 0 0 8px;"></div>
<svg style="left:767px;top:1688px;" width="30" height="30" viewBox="0 0 30 30"><g fill="none" stroke="#fff" stroke-width="2.400" stroke-linecap="round"><path d="M3 6 C16 6 24 15 25 28"/><path d="M20 10 L28 2 M20 2 H28 V10"/><path d="M8 22 L15 15"/><circle cx="6" cy="24.500" r="3.600"/></g></svg>
<div style="left:70px;top:1808px;width:14px;height:28px;background:#2a2a2a;border-radius:0 6px 6px 0;"></div>
<svg style="left:70px;top:1812px;" width="14" height="20" viewBox="0 0 14 20"><path d="M3.9 3 L10.5 10 L3.9 17" fill="none" stroke="#8a8a8a" stroke-width="2.4" stroke-linecap="round" stroke-linejoin="round"/></svg>
<div style="left:785px;top:1808px;width:14px;height:28px;background:#2a2a2a;border-radius:6px 0 0 6px;"></div>
<svg style="left:785px;top:1812px;" width="14" height="20" viewBox="0 0 14 20"><path d="M10.2 3 L3.5 10 L10.2 17" fill="none" stroke="#8a8a8a" stroke-width="2.4" stroke-linecap="round" stroke-linejoin="round"/></svg>
<div style="left:726.5px;top:1796.5px;width:55px;height:55px;background:#242424;border-radius:28px;"></div>
<svg style="left:738px;top:1808px;" width="32" height="32" viewBox="0 0 32 32"><circle cx="19" cy="12.500" r="10" fill="#fff"/><path d="M12 20 L3.500 28.500" stroke="#fff" stroke-width="4" stroke-linecap="round"/><path d="M19 7.500 V17.500 M14 12.500 H24" stroke="#242424" stroke-width="2.2"/></svg>
<div style="left:726.5px;top:1858.0px;width:55px;height:55px;background:#242424;border-radius:28px;"></div>
<svg style="left:738px;top:1869.5px;" width="32" height="32" viewBox="0 0 32 32"><path d="M9 17 V8 a1.800 1.800 0 0 1 3.600 0 V14 V5 a1.800 1.800 0 0 1 3.600 0 V14 V6 a1.800 1.800 0 0 1 3.600 0 V15 V9.500 a1.800 1.800 0 0 1 3.600 0 V20 C23.400 26 20 29 15.500 29 C11 29 9 27 6.500 23 L3 17.500 a1.900 1.900 0 0 1 3.200 -2 Z" fill="#fff"/></svg>
<svg style="left:306px;top:2172px;" width="257" height="257" viewBox="0 0 257 257"><rect x="0.500" y="0.500" width="256" height="256" fill="#373737" stroke="#5a5a5a" stroke-width="1"/><path d="M32.5 1 V256 M1 32.5 H256" stroke="#444" stroke-width="1.500"/><path d="M64.5 1 V256 M1 64.5 H256" stroke="#444" stroke-width="1.500"/><path d="M96.5 1 V256 M1 96.5 H256" stroke="#444" stroke-width="1.500"/><path d="M128.5 1 V256 M1 128.5 H256" stroke="#444" stroke-width="1.500"/><path d="M160.5 1 V256 M1 160.5 H256" stroke="#444" stroke-width="1.500"/><path d="M192.5 1 V256 M1 192.5 H256" stroke="#444" stroke-width="1.500"/><path d="M224.5 1 V256 M1 224.5 H256" stroke="#444" stroke-width="1.500"/></svg>
<div style="left:806px;top:1677px;width:3247px;height:1144px;background:radial-gradient(circle at 21.45px 21.45px,#282828 0,#282828 1.600px,rgba(40,40,40,0) 2.600px) 6.0px -18.5px/42.9px 42.9px,radial-gradient(circle at 107.25px 107.25px,#2b2b2b 0,#2b2b2b 2.800px,rgba(43,43,43,0) 3.800px) 6.0px -61.5px/214.5px 214.5px,#1d1d1d;border-radius:9px;overflow:hidden;"><div style="left:0;top:0;width:3247px;height:50px;background:#222222"></div></div>
<div style="left:821px;top:1683px;width:62.5px;height:38px;background:#222222;border-radius:8px;border:1.500px solid #3e3e3e;"></div>
<svg style="left:829px;top:1687px;" width="30" height="30" viewBox="0 0 30 30"><circle cx="15" cy="15" r="12.500" fill="none" stroke="#e6e6e6" stroke-width="2.400"/><path d="M9 15 C9 11 11 9 13 8" stroke="#e6e6e6" stroke-width="3.400" stroke-linecap="round" fill="none"/><circle cx="17" cy="7.500" r="1.800" fill="#e6e6e6"/></svg>
<svg style="left:861.5px;top:1697px;" width="18" height="12" viewBox="0 0 18 12"><path d="M3 2.7 L9 8.7 L15 2.7" fill="none" stroke="#e0e0e0" stroke-width="2.4" stroke-linecap="round" stroke-linejoin="round"/></svg>
<div style="left:895px;top:1683px;width:180.5px;height:38px;background:#222222;border-radius:8px;border:1.500px solid #3e3e3e;"></div>
<svg style="left:904px;top:1688px;" width="29" height="29" viewBox="0 0 32 32"><rect x="9" y="9" width="14" height="14" fill="#e6e6e6"/><path d="M3 10 V3 H10 M22 3 H29 V10 M29 22 V29 H22 M10 29 H3 V22" fill="none" stroke="#e6e6e6" stroke-width="2.4"/></svg>
<div style="top:1686.9px;height:30.7px;line-height:30.7px;font-size:23.6px;color:#e0e0e0;white-space:nowrap;left:946.5px;">Object</div>
<svg style="left:1053px;top:1697px;" width="18" height="12" viewBox="0 0 18 12"><path d="M3 2.7 L9 8.7 L15 2.7" fill="none" stroke="#e0e0e0" stroke-width="2.4" stroke-linecap="round" stroke-linejoin="round"/></svg>
<div style="top:1686.9px;height:30.7px;line-height:30.7px;font-size:23.6px;color:#d8d8d8;white-space:nowrap;left:1102px;">View</div>
<div style="top:1686.9px;height:30.7px;line-height:30.7px;font-size:23.6px;color:#d8d8d8;white-space:nowrap;left:1183px;">Select</div>
<div style="top:1686.9px;height:30.7px;line-height:30.7px;font-size:23.6px;color:#d8d8d8;white-space:nowrap;left:1278.5px;">Add</div>
<div style="top:1686.9px;height:30.7px;line-height:30.7px;font-size:23.6px;color:#d8d8d8;white-space:nowrap;left:1351.5px;">Node</div>
<div style="left:1434.5px;top:1689.5px;width:25px;height:25px;background:#4772b3;border-radius:5px;border:1.500px solid #3a3a3a;"></div>
<svg style="left:1437px;top:1692px;" width="20" height="20" viewBox="0 0 20 20"><path d="M4 10 L8.500 15 L16.500 4.500" stroke="#fff" stroke-width="2.800" fill="none" stroke-linecap="round" stroke-linejoin="round"/></svg>
<div style="top:1687.1px;height:30.4px;line-height:30.4px;font-size:23.4px;color:#e6e6e6;white-space:nowrap;left:1468.5px;">Use Nodes</div>
<div style="left:2086px;top:1683px;width:157.5px;height:38px;background:#222222;border-radius:8px;border:1.500px solid #3e3e3e;"></div>
<div style="top:1686.9px;height:30.7px;line-height:30.7px;font-size:23.6px;color:#e0e0e0;white-space:nowrap;left:2101.5px;">Slot 1</div>
<svg style="left:2222px;top:1697px;" width="18" height="12" viewBox="0 0 18 12"><path d="M3 2.7 L9 8.7 L15 2.7" fill="none" stroke="#e0e0e0" stroke-width="2.4" stroke-linecap="round" stroke-linejoin="round"/></svg>
<div style="left:2256px;top:1683px;width:422px;height:38px;background:#222222;border-radius:8px;border:1.500px solid #3e3e3e;overflow:hidden;"><div style="left:60.500px;top:0;width:240px;height:40px;background:#1d1d1d"></div><div style="left:301px;top:0;width:39px;height:40px;background:#545454"></div><div style="left:341.500px;top:0;width:39px;height:40px;background:#545454"></div><div style="left:382px;top:0;width:40px;height:40px;background:#545454"></div></div>
<svg style="left:2263px;top:1687.5px;" width="29" height="29" viewBox="0 0 32 32"><circle cx="16" cy="16" r="12" fill="none" stroke="#e6e6e6" stroke-width="2.4"/><path d="M16 4 A12 12 0 0 0 4 16 H16 Z M16 28 A12 12 0 0 0 28 16 H16Z" fill="#e6e6e6"/></svg>
<svg style="left:2295.5px;top:1697px;" width="18" height="12" viewBox="0 0 18 12"><path d="M3 2.7 L9 8.7 L15 2.7" fill="none" stroke="#e0e0e0" stroke-width="2.4" stroke-linecap="round" stroke-linejoin="round"/></svg>
<div style="top:1687.3px;height:29.9px;line-height:29.9px;font-size:23.0px;color:#e6e6e6;white-space:nowrap;left:2333px;">OUTMAT1</div>
<svg style="left:2563px;top:1688px;" width="28" height="28" viewBox="0 0 32 32"><path d="M16 3.5 C12 6 8 6.5 4.5 6.5 C4.5 16 7 24 16 28.5 C25 24 27.500 16 27.5 6.5 C24 6.5 20 6 16 3.500Z" fill="none" stroke="#b0b0b0" stroke-width="2.4" stroke-linejoin="round"/></svg>
<svg style="left:2603px;top:1687px;" width="29" height="29" viewBox="0 0 32 32"><g fill="none" stroke="#e6e6e6" stroke-width="2.4" stroke-linejoin="round"><path d="M10 7 V3.5 H21 L28 10.5 V23 H10 V7"/><path d="M20.5 3.5 V11 H28" /><path d="M10 9 H4 V28.5 H21 V23"/></g></svg>
<svg style="left:2647px;top:1691px;" width="23" height="23" viewBox="0 0 32 32"><path d="M8 8 L24 24 M24 8 L8 24" stroke="#e6e6e6" stroke-width="2.8" stroke-linecap="round" fill="none"/></svg>
<svg style="left:2695px;top:1687px;" width="29" height="29" viewBox="0 0 32 32"><g fill="none" stroke="#aaaaaa" stroke-width="2.4" stroke-linejoin="round" stroke-linecap="round"><path d="M19 4 L28 13 L24.5 14.5 L19.5 19.5 L19 25 L7 13 L12.5 12.5 L17.5 7.5 Z"/><path d="M12.5 19.5 L4 28"/></g></svg>
<div style="left:3795px;top:1683px;width:38.5px;height:38px;background:#3a3a3a;border-radius:8px;border:1.500px solid #333333;"></div>
<svg style="left:3801px;top:1688px;" width="28" height="28" viewBox="0 0 32 32"><path d="M12 30 V6 M4 14 L12 5 L20 14 M12 30 H26" fill="none" stroke="#808080" stroke-width="2.6" stroke-linecap="round" stroke-linejoin="round"/></svg>
<div style="left:3844.5px;top:1683px;width:103.0px;height:38px;background:#222222;border-radius:8px;border:1.500px solid #3e3e3e;overflow:hidden;"><div style="left:0;top:0;width:37px;height:40px;background:#545454"></div></div>
<svg style="left:3847px;top:1685.5px;" width="33" height="33" viewBox="0 0 32 32"><path d="M6 12 L12 6 C20 2 30 10 25 19 C23 24 20 26 16 28 L12 24 C18 21 21 18 20 14 C19 10 14 10 10 16 Z" fill="none" stroke="#b0b0b0" stroke-width="2.400" stroke-linejoin="round"/></svg>
<svg style="left:3891px;top:1688px;" width="30" height="28" viewBox="0 0 30 28"><rect x="2" y="2" width="10" height="10" fill="#e6e6e6"/><path d="M7 14 V27 M21 0 V27 M14 7 H29 M0 21 H29" stroke="#c8c8c8" stroke-width="2.200" fill="none"/></svg>
<svg style="left:3925.5px;top:1697px;" width="18" height="12" viewBox="0 0 18 12"><path d="M3 2.7 L9 8.7 L15 2.7" fill="none" stroke="#e0e0e0" stroke-width="2.4" stroke-linecap="round" stroke-linejoin="round"/></svg>
<div style="left:3959.5px;top:1683px;width:77.5px;height:38px;background:#222222;border-radius:8px;border:1.500px solid #3e3e3e;overflow:hidden;"><div style="left:0;top:0;width:36.500px;height:40px;background:#4772b3"></div></div>
<svg style="left:3963px;top:1687px;" width="30" height="30" viewBox="0 0 32 32"><circle cx="19" cy="12" r="9" fill="#fff"/><circle cx="12.500" cy="19" r="9" fill="none" stroke="#fff" stroke-width="2.4" stroke-dasharray="34 8"/></svg>
<svg style="left:4008px;top:1697px;" width="18" height="12" viewBox="0 0 18 12"><path d="M3 2.7 L9 8.7 L15 2.7" fill="none" stroke="#e0e0e0" stroke-width="2.4" stroke-linecap="round" stroke-linejoin="round"/></svg>
<div style="left:806px;top:1757px;width:15px;height:28px;background:#212121;border-radius:0 6px 6px 0;"></div>
<svg style="left:805.5px;top:1761px;" width="14" height="20" viewBox="0 0 14 20"><path d="M3.9 3 L10.5 10 L3.9 17" fill="none" stroke="#b0b0b0" stroke-width="2.4" stroke-linecap="round" stroke-linejoin="round"/></svg>
<svg style="left:841.5px;top:1756.5px;" width="29" height="29" viewBox="0 0 32 32"><rect x="9" y="9" width="14" height="14" fill="#e6e6e6"/><path d="M3 10 V3 H10 M22 3 H29 V10 M29 22 V29 H22 M10 29 H3 V22" fill="none" stroke="#e6e6e6" stroke-width="2.4"/></svg>
<div style="top:1756.2px;height:29.6px;line-height:29.6px;font-size:22.8px;color:#e0e0e0;white-space:nowrap;left:889px;">Tütchen_rissc_mappes</div>
<svg style="left:1157px;top:1761.5px;" width="14" height="20" viewBox="0 0 14 20"><path d="M3.9 3 L10.5 10 L3.9 17" fill="none" stroke="#d8d8d8" stroke-width="2.4" stroke-linecap="round" stroke-linejoin="round"/></svg>
<svg style="left:1188px;top:1756.5px;" width="29" height="29" viewBox="0 0 32 32"><path d="M6 6 H26 L16 26 Z" fill="none" stroke="#e6e6e6" stroke-width="2.4"/><rect x="2.500" y="2.5" width="7" height="7" fill="#1d1d1d" stroke="#e6e6e6" stroke-width="2"/><rect x="22.500" y="2.500" width="7" height="7" fill="#1d1d1d" stroke="#e6e6e6" stroke-width="2"/><rect x="12.5" y="22.500" width="7" height="7" fill="#1d1d1d" stroke="#e6e6e6" stroke-width="2"/></svg>
<div style="top:1756.2px;height:29.6px;line-height:29.6px;font-size:22.8px;color:#e0e0e0;white-space:nowrap;left:1236.5px;">Tütchen_rissc_mappes</div>
<svg style="left:1504px;top:1761.5px;" width="14" height="20" viewBox="0 0 14 20"><path d="M3.9 3 L10.5 10 L3.9 17" fill="none" stroke="#d8d8d8" stroke-width="2.4" stroke-linecap="round" stroke-linejoin="round"/></svg>
<svg style="left:1535.5px;top:1756.5px;" width="29" height="29" viewBox="0 0 32 32"><circle cx="16" cy="16" r="12" fill="none" stroke="#e6e6e6" stroke-width="2.4"/><path d="M16 4 A12 12 0 0 0 4 16 H16 Z M16 28 A12 12 0 0 0 28 16 H16Z" fill="#e6e6e6"/></svg>
<div style="top:1756.0px;height:29.9px;line-height:29.9px;font-size:23.0px;color:#e0e0e0;white-space:nowrap;left:1582px;">OUTMAT1</div>
<div style="left:4043px;top:1747px;width:6px;height:1044px;background:#333333;border-radius:3px;"></div>
<div style="left:822.5px;top:2811px;width:3213px;height:6px;background:#333333;border-radius:3px;"></div>
<div style="left:4038px;top:1756px;width:15px;height:28px;background:#212121;border-radius:6px 0 0 6px;"></div>
<svg style="left:4039px;top:1760px;" width="14" height="20" viewBox="0 0 14 20"><path d="M10.2 3 L3.5 10 L10.2 17" fill="none" stroke="#8c8c8c" stroke-width="2.6" stroke-linecap="round" stroke-linejoin="round"/></svg>
<div style="left:1347.7px;top:2093px;width:512.0999999999999px;height:580px;background:#303030;border-radius:9px;box-shadow:0 0 0 1.500px #111,0 5px 12px 3px rgba(0,0,0,.45);overflow:hidden;"><div style="left:0;top:0;width:512.0999999999999px;height:41.500px;background:#7d4a21"></div></div>
<svg style="left:1368.7px;top:2105.5px;" width="22" height="16" viewBox="0 0 22 16"><path d="M3 3.6 L11 11.6 L19 3.6" fill="none" stroke="#e6e6e6" stroke-width="2.2" stroke-linecap="round" stroke-linejoin="round"/></svg>
<div style="top:2097.3px;height:32.0px;line-height:32.0px;font-size:24.6px;color:#ececec;white-space:nowrap;letter-spacing:0.82px;left:1401.4px;">idml-template-rf42027982-1001__1.p...</div>
<div style="top:2150.9px;height:32.0px;line-height:32.0px;font-size:24.6px;color:#e2e2e2;white-space:nowrap;left:-163px;width:2000px;text-align:right;">Color</div>
<div style="top:2199.8px;height:32.0px;line-height:32.0px;font-size:24.6px;color:#e2e2e2;white-space:nowrap;left:-163px;width:2000px;text-align:right;">Alpha</div>
<div style="left:1369.5px;top:2254.5px;width:469px;height:39.5px;background:#282828;border-radius:8px;border:1.500px solid #444;overflow:hidden;"><div style="left:66px;top:0;width:230px;height:40px;background:#1d1d1d"></div><div style="left:297px;top:0;width:42px;height:40px;background:#545454"></div><div style="left:340px;top:0;width:42px;height:40px;background:#545454"></div><div style="left:383.500px;top:0;width:42px;height:40px;background:#545454"></div><div style="left:426.500px;top:0;width:42px;height:40px;background:#545454"></div></div>
<svg style="left:1377.5px;top:2258.5px;" width="31" height="31" viewBox="0 0 32 32"><path d="M4 3 H28 V29 H4 Z" fill="none" stroke="#e6e6e6" stroke-width="2.2"/><path d="M4 29 L13 12 L20 24 L23 20 L28 29 Z" fill="#e6e6e6"/><circle cx="21.5" cy="10" r="2.6" fill="#e6e6e6"/></svg>
<svg style="left:1413.5px;top:2269px;" width="18" height="12" viewBox="0 0 18 12"><path d="M3 2.7 L9 8.7 L15 2.7" fill="none" stroke="#e0e0e0" stroke-width="2.4" stroke-linecap="round" stroke-linejoin="round"/></svg>
<div style="top:2257.8px;height:32.0px;line-height:32.0px;font-size:24.6px;color:#e6e6e6;white-space:nowrap;letter-spacing:0.88px;left:1452px;">idml-template-r...</div>
<svg style="left:1673px;top:2259px;" width="30" height="30" viewBox="0 0 32 32"><path d="M16 3.5 C12 6 8 6.5 4.5 6.5 C4.5 16 7 24 16 28.5 C25 24 27.500 16 27.5 6.5 C24 6.5 20 6 16 3.500Z" fill="none" stroke="#a0a0a0" stroke-width="2.4" stroke-linejoin="round"/></svg>
<svg style="left:1716px;top:2258.5px;" width="30" height="30" viewBox="0 0 32 32"><g fill="none" stroke="#c8c8c8" stroke-width="2.4" stroke-linejoin="round"><path d="M10 7 V3.5 H21 L28 10.5 V23 H10 V7"/><path d="M20.5 3.5 V11 H28" /><path d="M10 9 H4 V28.5 H21 V23"/></g></svg>
<svg style="left:1759px;top:2258px;" width="32" height="32" viewBox="0 0 32 32"><path d="M3 5 H13 L15 8 H29 V11 H3 Z M3 13 H29 V28 H3 Z" fill="#e6e6e6"/></svg>
<svg style="left:1805px;top:2262px;" width="25" height="25" viewBox="0 0 32 32"><path d="M8 8 L24 24 M24 8 L8 24" stroke="#e0e0e0" stroke-width="2.8" stroke-linecap="round" fill="none"/></svg>
<div style="left:1369.5px;top:2306.5px;width:469.0px;height:40.0px;background:#282828;border-radius:8px;border:1.500px solid #444444;"></div>
<div style="top:2311.3px;height:32.0px;line-height:32.0px;font-size:24.6px;color:#e2e2e2;white-space:nowrap;left:1385.5px;">Linear</div>
<svg style="left:1817.0px;top:2321.5px;" width="18" height="12" viewBox="0 0 18 12"><path d="M3 2.7 L9 8.7 L15 2.7" fill="none" stroke="#e0e0e0" stroke-width="2.4" stroke-linecap="round" stroke-linejoin="round"/></svg>
<div style="left:1369.5px;top:2360px;width:469.0px;height:41px;background:#282828;border-radius:8px;border:1.500px solid #444444;"></div>
<div style="top:2365.3px;height:32.0px;line-height:32.0px;font-size:24.6px;color:#e2e2e2;white-space:nowrap;left:1385.5px;">Flat</div>
<svg style="left:1817.0px;top:2375.5px;" width="18" height="12" viewBox="0 0 18 12"><path d="M3 2.7 L9 8.7 L15 2.7" fill="none" stroke="#e0e0e0" stroke-width="2.4" stroke-linecap="round" stroke-linejoin="round"/></svg>
<div style="left:1369.5px;top:2413.5px;width:469.0px;height:40.5px;background:#282828;border-radius:8px;border:1.500px solid #444444;"></div>
<div style="top:2418.5px;height:32.0px;line-height:32.0px;font-size:24.6px;color:#e2e2e2;white-space:nowrap;left:1385.5px;">Repeat</div>
<svg style="left:1817.0px;top:2428.75px;" width="18" height="12" viewBox="0 0 18 12"><path d="M3 2.7 L9 8.7 L15 2.7" fill="none" stroke="#e0e0e0" stroke-width="2.4" stroke-linecap="round" stroke-linejoin="round"/></svg>
<div style="left:1369.5px;top:2467.5px;width:469.0px;height:40.5px;background:#282828;border-radius:8px;border:1.500px solid #444444;"></div>
<div style="top:2472.5px;height:32.0px;line-height:32.0px;font-size:24.6px;color:#e2e2e2;white-space:nowrap;left:1385.5px;">Single Image</div>
<svg style="left:1817.0px;top:2482.75px;" width="18" height="12" viewBox="0 0 18 12"><path d="M3 2.7 L9 8.7 L15 2.7" fill="none" stroke="#e0e0e0" stroke-width="2.4" stroke-linecap="round" stroke-linejoin="round"/></svg>
<div style="top:2525.9px;height:32.0px;line-height:32.0px;font-size:24.6px;color:#e2e2e2;white-space:nowrap;left:1370.5px;">Color Space</div>
<div style="left:1535px;top:2521px;width:303.5px;height:41px;background:#282828;border-radius:8px;border:1.500px solid #444444;"></div>
<div style="top:2526.3px;height:32.0px;line-height:32.0px;font-size:24.6px;color:#e2e2e2;white-space:nowrap;left:1551px;">sRGB</div>
<svg style="left:1817.0px;top:2536.5px;" width="18" height="12" viewBox="0 0 18 12"><path d="M3 2.7 L9 8.7 L15 2.7" fill="none" stroke="#e0e0e0" stroke-width="2.4" stroke-linecap="round" stroke-linejoin="round"/></svg>
<div style="top:2578.7px;height:32.0px;line-height:32.0px;font-size:24.6px;color:#e2e2e2;white-space:nowrap;left:1370.5px;">Alpha</div>
<div style="left:1535px;top:2574.5px;width:303.5px;height:41.0px;background:#282828;border-radius:8px;border:1.500px solid #444444;"></div>
<div style="top:2579.8px;height:32.0px;line-height:32.0px;font-size:24.6px;color:#e2e2e2;white-space:nowrap;left:1551px;">Straight</div>
<svg style="left:1817.0px;top:2590.0px;" width="18" height="12" viewBox="0 0 18 12"><path d="M3 2.7 L9 8.7 L15 2.7" fill="none" stroke="#e0e0e0" stroke-width="2.4" stroke-linecap="round" stroke-linejoin="round"/></svg>
<div style="top:2627.6px;height:32.0px;line-height:32.0px;font-size:24.6px;color:#e2e2e2;white-space:nowrap;left:1370.5px;">Vector</div>
<div style="left:2206.3px;top:1939.7px;width:513.0px;height:647.3px;background:#303030;border-radius:9px;box-shadow:0 0 0 1.500px #111,0 5px 12px 3px rgba(0,0,0,.45);overflow:hidden;"><div style="left:0;top:0;width:513.0px;height:41.500px;background:#2b662e"></div></div>
<svg style="left:2227.3px;top:1952.2px;" width="22" height="16" viewBox="0 0 22 16"><path d="M3 3.6 L11 11.6 L19 3.6" fill="none" stroke="#e6e6e6" stroke-width="2.2" stroke-linecap="round" stroke-linejoin="round"/></svg>
<div style="top:1944.0px;height:32.0px;line-height:32.0px;font-size:24.6px;color:#ececec;white-space:nowrap;left:2260.0px;">Principled BSDF</div>
<div style="top:1997.8px;height:32.0px;line-height:32.0px;font-size:24.6px;color:#e2e2e2;white-space:nowrap;left:696px;width:2000px;text-align:right;">BSDF</div>
<div style="top:2044.7px;height:32.0px;line-height:32.0px;font-size:24.6px;color:#e2e2e2;white-space:nowrap;left:2229.7px;">Base Color</div>
<div style="left:2228.7px;top:2087.3px;width:469.3000000000002px;height:39.899999999999636px;background:#545454;border-radius:7px;overflow:hidden;box-shadow:0 0 0 1.500px #2a2a2a;"></div>
<div style="top:2091.5px;height:32.0px;line-height:32.0px;font-size:24.6px;color:#e2e2e2;white-space:nowrap;left:2262.2px;">Metallic</div>
<div style="top:2091.5px;height:32.0px;line-height:32.0px;font-size:24.6px;color:#e2e2e2;white-space:nowrap;letter-spacing:0.9px;left:668.5px;width:2000px;text-align:right;">0.000</div>
<div style="left:2228.7px;top:2135.7px;width:469.3000000000002px;height:39.80000000000018px;background:#545454;border-radius:7px;overflow:hidden;box-shadow:0 0 0 1.500px #2a2a2a;"><div style="left:0;top:0;width:11px;height:60px;background:#4772b3"></div></div>
<div style="top:2139.9px;height:32.0px;line-height:32.0px;font-size:24.6px;color:#e2e2e2;white-space:nowrap;left:2262.2px;">Roughness</div>
<div style="top:2139.9px;height:32.0px;line-height:32.0px;font-size:24.6px;color:#e2e2e2;white-space:nowrap;letter-spacing:0.9px;left:668.5px;width:2000px;text-align:right;">0.029</div>
<div style="left:2228.7px;top:2183px;width:469.3000000000002px;height:39.5px;background:#545454;border-radius:7px;overflow:hidden;box-shadow:0 0 0 1.500px #2a2a2a;"></div>
<div style="top:2187.0px;height:32.0px;line-height:32.0px;font-size:24.6px;color:#e2e2e2;white-space:nowrap;left:2262.2px;">IOR</div>
<div style="top:2187.0px;height:32.0px;line-height:32.0px;font-size:24.6px;color:#e2e2e2;white-space:nowrap;letter-spacing:0.9px;left:668.5px;width:2000px;text-align:right;">1.500</div>
<div style="left:2228.7px;top:2229.5px;width:469.3000000000002px;height:39.80000000000018px;background:#4772b3;border-radius:7px;overflow:hidden;box-shadow:0 0 0 1.500px #2a2a2a;"></div>
<div style="top:2233.7px;height:32.0px;line-height:32.0px;font-size:24.6px;color:#e2e2e2;white-space:nowrap;left:2262.2px;">Alpha</div>
<div style="top:2233.7px;height:32.0px;line-height:32.0px;font-size:24.6px;color:#e2e2e2;white-space:nowrap;letter-spacing:0.9px;left:668.5px;width:2000px;text-align:right;">1.000</div>
<div style="top:2281.1px;height:32.0px;line-height:32.0px;font-size:24.6px;color:#e2e2e2;white-space:nowrap;left:2229.7px;">Normal</div>
<svg style="left:2233px;top:2329.1px;" width="16" height="22" viewBox="0 0 16 22"><path d="M4.4 3 L12.0 11 L4.4 19" fill="none" stroke="#e0e0e0" stroke-width="2.2" stroke-linecap="round" stroke-linejoin="round"/></svg>
<div style="top:2323.9px;height:32.0px;line-height:32.0px;font-size:24.6px;color:#e2e2e2;white-space:nowrap;left:2260px;">Subsurface</div>
<svg style="left:2233px;top:2372.0px;" width="16" height="22" viewBox="0 0 16 22"><path d="M4.4 3 L12.0 11 L4.4 19" fill="none" stroke="#e0e0e0" stroke-width="2.2" stroke-linecap="round" stroke-linejoin="round"/></svg>
<div style="top:2366.8px;height:32.0px;line-height:32.0px;font-size:24.6px;color:#e2e2e2;white-space:nowrap;left:2260px;">Specular</div>
<svg style="left:2233px;top:2415.4px;" width="16" height="22" viewBox="0 0 16 22"><path d="M4.4 3 L12.0 11 L4.4 19" fill="none" stroke="#e0e0e0" stroke-width="2.2" stroke-linecap="round" stroke-linejoin="round"/></svg>
<div style="top:2410.2px;height:32.0px;line-height:32.0px;font-size:24.6px;color:#e2e2e2;white-space:nowrap;left:2260px;">Transmission</div>
<svg style="left:2233px;top:2458.3px;" width="16" height="22" viewBox="0 0 16 22"><path d="M4.4 3 L12.0 11 L4.4 19" fill="none" stroke="#e0e0e0" stroke-width="2.2" stroke-linecap="round" stroke-linejoin="round"/></svg>
<div style="top:2453.1px;height:32.0px;line-height:32.0px;font-size:24.6px;color:#e2e2e2;white-space:nowrap;left:2260px;">Coat</div>
<svg style="left:2233px;top:2501.1px;" width="16" height="22" viewBox="0 0 16 22"><path d="M4.4 3 L12.0 11 L4.4 19" fill="none" stroke="#e0e0e0" stroke-width="2.2" stroke-linecap="round" stroke-linejoin="round"/></svg>
<div style="top:2495.9px;height:32.0px;line-height:32.0px;font-size:24.6px;color:#e2e2e2;white-space:nowrap;left:2260px;">Sheen</div>
<svg style="left:2233px;top:2544.0px;" width="16" height="22" viewBox="0 0 16 22"><path d="M4.4 3 L12.0 11 L4.4 19" fill="none" stroke="#e0e0e0" stroke-width="2.2" stroke-linecap="round" stroke-linejoin="round"/></svg>
<div style="top:2538.8px;height:32.0px;line-height:32.0px;font-size:24.6px;color:#e2e2e2;white-space:nowrap;left:2260px;">Emission</div>
<div style="left:2807px;top:1939.7px;width:298.1999999999998px;height:245.79999999999995px;background:#303030;border-radius:9px;box-shadow:0 0 0 1.500px #111,0 5px 12px 3px rgba(0,0,0,.45);overflow:hidden;"><div style="left:0;top:0;width:298.1999999999998px;height:41.500px;background:#3c1d26"></div></div>
<svg style="left:2828px;top:1952.2px;" width="22" height="16" viewBox="0 0 22 16"><path d="M3 3.6 L11 11.6 L19 3.6" fill="none" stroke="#e6e6e6" stroke-width="2.2" stroke-linecap="round" stroke-linejoin="round"/></svg>
<div style="top:1944.0px;height:32.0px;line-height:32.0px;font-size:24.6px;color:#ececec;white-space:nowrap;left:2860.7px;">Material Output</div>
<div style="left:2829px;top:1988.5px;width:255.5px;height:41.0px;background:#282828;border-radius:8px;border:1.500px solid #444444;"></div>
<div style="top:1993.8px;height:32.0px;line-height:32.0px;font-size:24.6px;color:#e2e2e2;white-space:nowrap;left:2845px;">All</div>
<svg style="left:3063.0px;top:2004.0px;" width="18" height="12" viewBox="0 0 18 12"><path d="M3 2.7 L9 8.7 L15 2.7" fill="none" stroke="#e0e0e0" stroke-width="2.4" stroke-linecap="round" stroke-linejoin="round"/></svg>
<div style="top:2040.7px;height:32.0px;line-height:32.0px;font-size:24.6px;color:#e2e2e2;white-space:nowrap;left:2831px;">Surface</div>
<div style="top:2087.6px;height:32.0px;line-height:32.0px;font-size:24.6px;color:#e2e2e2;white-space:nowrap;left:2831px;">Volume</div>
<div style="top:2134.9px;height:32.0px;line-height:32.0px;font-size:24.6px;color:#e2e2e2;white-space:nowrap;left:2831px;">Displacement</div>
<svg style="left:0px;top:0px;" width="4962" height="2948" viewBox="0 0 4962 2948"><path d="M1861 2166.600 C1990 2166.600 2080 2060.400 2206 2060.400" fill="none" stroke="#111" stroke-width="6.500"/><path d="M1861 2166.600 C1990 2166.600 2080 2060.400 2206 2060.400" fill="none" stroke="#c8c829" stroke-width="3.800"/><path d="M2720 2013.500 C2765 2013.500 2765 2056.400 2806 2056.400" fill="none" stroke="#111" stroke-width="6.500"/><path d="M2720 2013.500 C2765 2013.500 2765 2056.400 2806 2056.400" fill="none" stroke="#62c862" stroke-width="3.800"/></svg>
<div style="left:1851.3px;top:2156.6px;width:20px;height:20px;background:#c8c829;border-radius:10px;border:1.500px solid #141414;"></div>
<div style="left:1851.3px;top:2205.5px;width:20px;height:20px;background:#a1a1a1;border-radius:10px;border:1.500px solid #141414;"></div>
<div style="left:1336.7px;top:2633.3px;width:20px;height:20px;background:#6363c7;border-radius:10px;border:1.500px solid #141414;"></div>
<div style="left:2710.3px;top:2003.5px;width:20px;height:20px;background:#62c862;border-radius:10px;border:1.500px solid #141414;"></div>
<div style="left:2195.8px;top:2050.4px;width:20px;height:20px;background:#c8c829;border-radius:10px;border:1.500px solid #141414;"></div>
<div style="left:2195.8px;top:2097.2px;width:20px;height:20px;background:#a1a1a1;border-radius:10px;border:1.500px solid #141414;"></div>
<div style="left:2195.8px;top:2145.6px;width:20px;height:20px;background:#a1a1a1;border-radius:10px;border:1.500px solid #141414;"></div>
<div style="left:2195.8px;top:2192.7px;width:20px;height:20px;background:#a1a1a1;border-radius:10px;border:1.500px solid #141414;"></div>
<div style="left:2195.8px;top:2239.4px;width:20px;height:20px;background:#a1a1a1;border-radius:10px;border:1.500px solid #141414;"></div>
<div style="left:2195.8px;top:2286.8px;width:20px;height:20px;background:#6363c7;border-radius:10px;border:1.500px solid #141414;"></div>
<div style="left:2796px;top:2046.4px;width:20px;height:20px;background:#62c862;border-radius:10px;border:1.500px solid #141414;"></div>
<div style="left:2796px;top:2093.3px;width:20px;height:20px;background:#62c862;border-radius:10px;border:1.500px solid #141414;"></div>
<div style="left:2796px;top:2140.6px;width:20px;height:20px;background:#6363c7;border-radius:10px;border:1.500px solid #141414;"></div>
<svg style="left:92px;top:2829px;" width="22" height="30" viewBox="0 0 22 30"><rect x="1.500" y="1.500" width="19" height="27" rx="6.500" fill="none" stroke="#a4a4a4" stroke-width="2"/><path d="M1.500 13 V8 a6.500 6.500 0 0 1 6.500 -6.500 H11 V13Z" fill="#a4a4a4"/></svg>
<div style="top:2830.1px;height:29.4px;line-height:29.4px;font-size:22.6px;color:#a4a4a4;white-space:nowrap;left:137px;">Select</div>
<svg style="left:514.5px;top:2829px;" width="22" height="30" viewBox="0 0 22 30"><rect x="1.500" y="1.500" width="19" height="27" rx="6.500" fill="none" stroke="#a4a4a4" stroke-width="2"/><rect x="8.500" y="5" width="5" height="10" rx="2" fill="#a4a4a4"/></svg>
<div style="top:2830.1px;height:29.4px;line-height:29.4px;font-size:22.6px;color:#a4a4a4;white-space:nowrap;left:558.5px;">Pan View</div>
<svg style="left:936px;top:2829px;" width="22" height="30" viewBox="0 0 22 30"><rect x="1.500" y="1.500" width="19" height="27" rx="6.500" fill="none" stroke="#a4a4a4" stroke-width="2"/><path d="M20.500 13 V8 a6.500 6.500 0 0 0 -6.500 -6.500 H11 V13Z" fill="#a4a4a4"/></svg>
<div style="top:2830.1px;height:29.4px;line-height:29.4px;font-size:22.6px;color:#a4a4a4;white-space:nowrap;left:981px;">Node</div>
<div style="top:2830.1px;height:29.4px;line-height:29.4px;font-size:22.6px;color:#a4a4a4;white-space:nowrap;letter-spacing:0.6px;left:2870.5px;width:2000px;text-align:right;">4.0.2</div>
</div><div style="left:0;top:0;width:100%;height:100%;border-radius:22px;box-shadow:inset 0 0 0 1.500px rgba(255,255,255,.14);"></div></div>
</body></html>
